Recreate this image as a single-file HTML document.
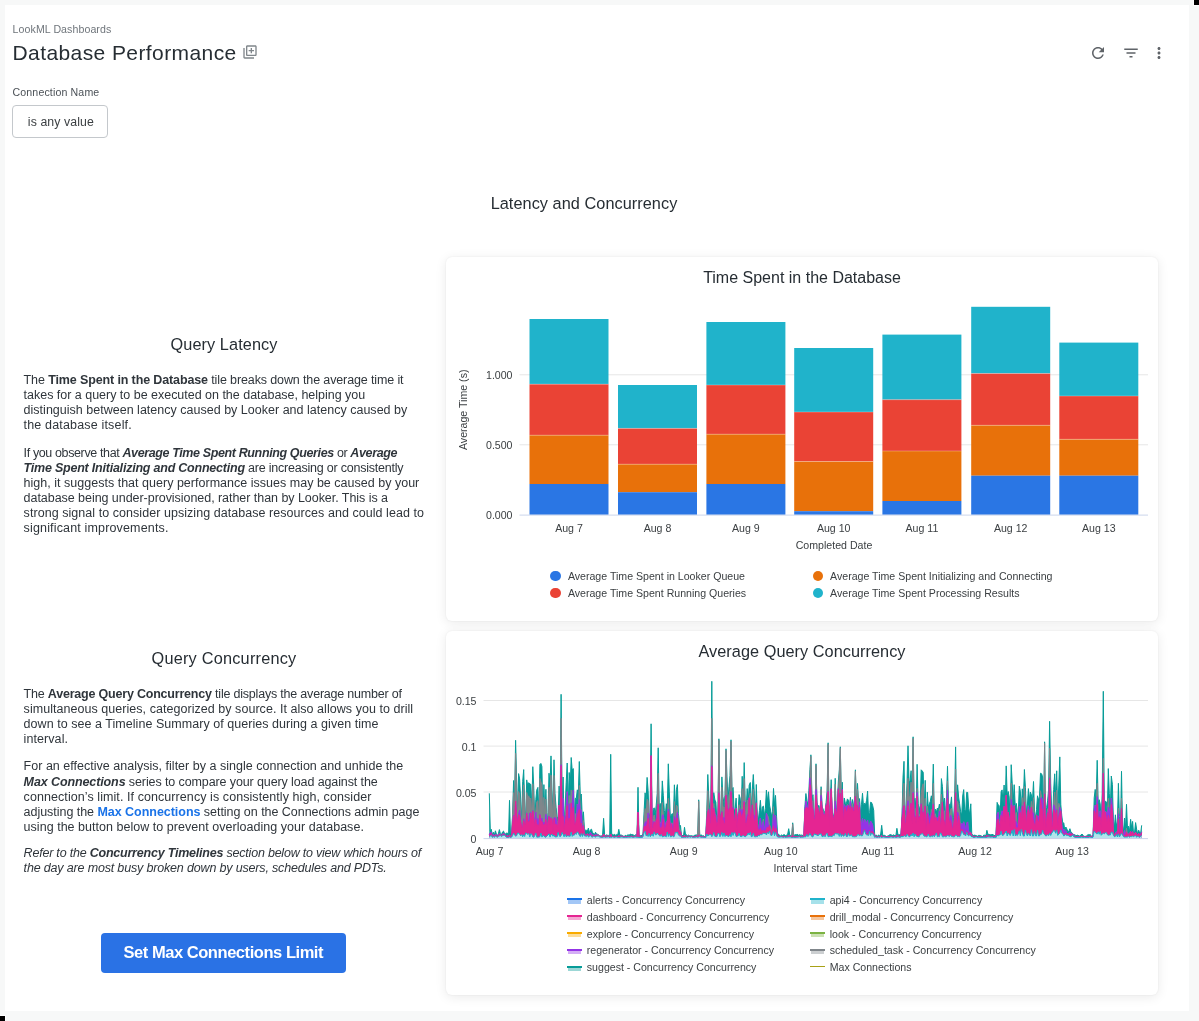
<!DOCTYPE html>
<html>
<head>
<meta charset="utf-8">
<style>
*{box-sizing:border-box;margin:0;padding:0}
html,body{width:1199px;height:1021px;overflow:hidden;}
body{will-change:transform;background:#f7f8f8;font-family:"Liberation Sans",sans-serif;color:#262d33}
.abs{position:absolute;white-space:nowrap}
#panel{position:absolute;left:5px;top:5px;width:1184px;height:1006px;background:#fff}
.blk{position:absolute;background:#000;width:5px;height:5px}
.t{position:absolute;white-space:nowrap;line-height:1}
.para{position:absolute;left:24px;font-size:12.5px;line-height:15px;color:#2f353b;white-space:nowrap}
.ln{position:absolute;left:23.6px;font-size:12.5px;line-height:1;color:#2f353b;white-space:nowrap}
.ln b{font-weight:bold}
.ln i{font-style:italic}
.para b{font-weight:bold}
.para i{font-style:italic}
.card{position:absolute;left:446px;width:712px;background:#fff;border-radius:6px;box-shadow:0 2px 12px rgba(0,0,0,0.085),0 0 2px rgba(0,0,0,0.07)}
svg{position:absolute;overflow:visible}
</style>
</head>
<body>
<div id="panel"></div>
<div class="blk" style="left:1194px;top:0;box-shadow:0 0 0 1px #fff"></div>
<div class="blk" style="left:0;top:1016px;box-shadow:0 0 0 1px #fff"></div>

<!-- header -->
<div class="t" style="left:12.6px;top:24px;font-size:10.6px;letter-spacing:0.08px;color:#6f757b">LookML Dashboards</div>
<div class="t" style="left:12.5px;top:42.1px;font-size:21px;letter-spacing:0.41px;color:#262d33">Database Performance</div>
<svg style="left:242px;top:44px" width="16" height="16" viewBox="0 0 24 24"><path fill="#80868b" d="M4 6H2v14c0 1.1.9 2 2 2h14v-2H4V6zm16-4H8c-1.1 0-2 .9-2 2v12c0 1.1.9 2 2 2h12c1.1 0 2-.9 2-2V4c0-1.1-.9-2-2-2zm0 14H8V4h12v12zm-7-2h2v-3h3V9h-3V6h-2v3h-3v2h3z"/></svg>
<svg style="left:1089px;top:44px" width="18" height="18" viewBox="0 0 24 24"><path fill="#5f6368" d="M17.65 6.35C16.2 4.9 14.21 4 12 4c-4.42 0-7.99 3.580-7.99 8s3.57 8 7.99 8c3.73 0 6.84-2.55 7.73-6h-2.08c-.82 2.33-3.04 4-5.650 4-3.31 0-6-2.69-6-6s2.69-6 6-6c1.66 0 3.140.69 4.22 1.78L13 11h7V4l-2.35 2.35z"/></svg>
<svg style="left:1122px;top:44px" width="18" height="18" viewBox="0 0 24 24"><path fill="#5f6368" d="M10 18h4v-2h-4v2zM3 6v2h18V6H3zm3 7h12v-2H6v2z"/></svg>
<svg style="left:1150px;top:44px" width="18" height="18" viewBox="0 0 24 24"><path fill="#5f6368" d="M12 8c1.1 0 2-.9 2-2s-.9-2-2-2-2 .9-2 2 .9 2 2 2zm0 2c-1.1 0-2 .9-2 2s.9 2 2 2 2-.9 2-2-.9-2-2-2zm0 6c-1.1 0-2 .9-2 2s.9 2 2 2 2-.9 2-2-.9-2-2-2z"/></svg>

<!-- filter -->
<div class="t" style="left:12.5px;top:87px;font-size:10.6px;letter-spacing:0.14px;color:#4a5056">Connection Name</div>
<div style="position:absolute;left:12px;top:105px;width:96px;height:32.5px;border:1px solid #c4c8cc;border-radius:4px"></div>
<div class="t" style="left:27.8px;top:115.5px;font-size:12.3px;letter-spacing:0.1px;color:#3c4043">is any value</div>

<!-- section heading -->
<div class="t" style="left:384px;width:400px;text-align:center;top:195px;font-size:16.3px;letter-spacing:0.05px;color:#262d33">Latency and Concurrency</div>

<div class="t" style="left:24px;width:400px;text-align:center;top:336px;font-size:16.3px;letter-spacing:0.08px;color:#262d33">Query Latency</div>
<div class="t" style="left:24px;width:400px;text-align:center;top:650.2px;font-size:16.3px;letter-spacing:0.22px;color:#262d33">Query Concurrency</div>
<div class="ln" style="top:373.82px;letter-spacing:-0.124px">The <b>Time Spent in the Database</b> tile breaks down the average time it</div>
<div class="ln" style="top:388.72px;letter-spacing:-0.017px">takes for a query to be executed on the database, helping you</div>
<div class="ln" style="top:403.62px;letter-spacing:0.012px">distinguish between latency caused by Looker and latency caused by</div>
<div class="ln" style="top:418.52px;letter-spacing:0.168px">the database itself.</div>
<div class="ln" style="top:447.12px;letter-spacing:-0.375px">If you observe that <b><i>Average Time Spent Running Queries</i></b> or <b><i>Average</i></b></div>
<div class="ln" style="top:462.02px;letter-spacing:-0.221px"><b><i>Time Spent Initializing and Connecting</i></b> are increasing or consistently</div>
<div class="ln" style="top:476.92px;letter-spacing:0.015px">high, it suggests that query performance issues may be caused by your</div>
<div class="ln" style="top:491.82px;letter-spacing:-0.046px">database being under-provisioned, rather than by Looker. This is a</div>
<div class="ln" style="top:506.72px;letter-spacing:0.051px">strong signal to consider upsizing database resources and could lead to</div>
<div class="ln" style="top:521.62px;letter-spacing:0.158px">significant improvements.</div>
<div class="ln" style="top:687.52px;letter-spacing:-0.203px">The <b>Average Query Concurrency</b> tile displays the average number of</div>
<div class="ln" style="top:702.52px;letter-spacing:0.045px">simultaneous queries, categorized by source. It also allows you to drill</div>
<div class="ln" style="top:717.62px;letter-spacing:0.043px">down to see a Timeline Summary of queries during a given time</div>
<div class="ln" style="top:732.62px;letter-spacing:0.075px">interval.</div>
<div class="ln" style="top:760.42px;letter-spacing:0.017px">For an effective analysis, filter by a single connection and unhide the</div>
<div class="ln" style="top:775.52px;letter-spacing:-0.107px"><b><i>Max Connections</i></b> series to compare your query load against the</div>
<div class="ln" style="top:790.62px;letter-spacing:0.075px">connection’s limit. If concurrency is consistently high, consider</div>
<div class="ln" style="top:805.72px;letter-spacing:-0.036px">adjusting the <b style="color:#1a73e8">Max Connections</b> setting on the Connections admin page</div>
<div class="ln" style="top:820.82px;letter-spacing:0.031px">using the button below to prevent overloading your database.</div>
<div class="ln" style="top:847.42px;letter-spacing:-0.211px"><i>Refer to the <b>Concurrency Timelines</b> section below to view which hours of</i></div>
<div class="ln" style="top:861.92px;letter-spacing:-0.165px"><i>the day are most busy broken down by users, schedules and PDTs.</i></div>
<div style="position:absolute;left:101px;top:933px;width:244.5px;height:40px;background:#2a72e5;border-radius:4px"></div>
<div class="t" style="left:101px;width:244.5px;text-align:center;top:944px;font-size:16.5px;font-weight:bold;letter-spacing:-0.45px;color:#fff">Set Max Connections Limit</div>

<div class="card" style="top:257px;height:363.5px"></div>
<div class="t" style="left:602px;width:400px;text-align:center;top:270px;font-size:16px;color:#262d33">Time Spent in the Database</div>
<svg style="left:0;top:0" width="1199" height="1021">
<line x1="519.5" x2="1148" y1="374.8" y2="374.8" stroke="#e6e6e6" stroke-width="1"/>
<line x1="519.5" x2="1148" y1="444.8" y2="444.8" stroke="#e6e6e6" stroke-width="1"/>
<rect x="529.5" y="319" width="79" height="65.20" fill="#20b3cb"/>
<rect x="529.5" y="384.2" width="79" height="51.00" fill="#ea4335"/>
<line x1="529.5" x2="608.5" y1="384.2" y2="384.2" stroke="#fff" stroke-opacity="0.35" stroke-width="0.8"/>
<rect x="529.5" y="435.2" width="79" height="48.80" fill="#e8710a"/>
<line x1="529.5" x2="608.5" y1="435.2" y2="435.2" stroke="#fff" stroke-opacity="0.35" stroke-width="0.8"/>
<rect x="529.5" y="484" width="79" height="30.80" fill="#2a76e4"/>
<rect x="618" y="385" width="79" height="43.40" fill="#20b3cb"/>
<rect x="618" y="428.4" width="79" height="35.80" fill="#ea4335"/>
<line x1="618" x2="697" y1="428.4" y2="428.4" stroke="#fff" stroke-opacity="0.35" stroke-width="0.8"/>
<rect x="618" y="464.2" width="79" height="28.00" fill="#e8710a"/>
<line x1="618" x2="697" y1="464.2" y2="464.2" stroke="#fff" stroke-opacity="0.35" stroke-width="0.8"/>
<rect x="618" y="492.2" width="79" height="22.60" fill="#2a76e4"/>
<rect x="706.4" y="322" width="79" height="63.00" fill="#20b3cb"/>
<rect x="706.4" y="385" width="79" height="49.20" fill="#ea4335"/>
<line x1="706.4" x2="785.4" y1="385" y2="385" stroke="#fff" stroke-opacity="0.35" stroke-width="0.8"/>
<rect x="706.4" y="434.2" width="79" height="49.80" fill="#e8710a"/>
<line x1="706.4" x2="785.4" y1="434.2" y2="434.2" stroke="#fff" stroke-opacity="0.35" stroke-width="0.8"/>
<rect x="706.4" y="484" width="79" height="30.80" fill="#2a76e4"/>
<rect x="794.2" y="348" width="79" height="64.00" fill="#20b3cb"/>
<rect x="794.2" y="412" width="79" height="49.50" fill="#ea4335"/>
<line x1="794.2" x2="873.2" y1="412" y2="412" stroke="#fff" stroke-opacity="0.35" stroke-width="0.8"/>
<rect x="794.2" y="461.5" width="79" height="49.70" fill="#e8710a"/>
<line x1="794.2" x2="873.2" y1="461.5" y2="461.5" stroke="#fff" stroke-opacity="0.35" stroke-width="0.8"/>
<rect x="794.2" y="511.2" width="79" height="3.60" fill="#2a76e4"/>
<rect x="882.4" y="334.6" width="79" height="65.10" fill="#20b3cb"/>
<rect x="882.4" y="399.7" width="79" height="51.30" fill="#ea4335"/>
<line x1="882.4" x2="961.4" y1="399.7" y2="399.7" stroke="#fff" stroke-opacity="0.35" stroke-width="0.8"/>
<rect x="882.4" y="451" width="79" height="50.00" fill="#e8710a"/>
<line x1="882.4" x2="961.4" y1="451" y2="451" stroke="#fff" stroke-opacity="0.35" stroke-width="0.8"/>
<rect x="882.4" y="501" width="79" height="13.80" fill="#2a76e4"/>
<rect x="971.2" y="306.8" width="79" height="66.70" fill="#20b3cb"/>
<rect x="971.2" y="373.5" width="79" height="51.80" fill="#ea4335"/>
<line x1="971.2" x2="1050.2" y1="373.5" y2="373.5" stroke="#fff" stroke-opacity="0.35" stroke-width="0.8"/>
<rect x="971.2" y="425.3" width="79" height="50.40" fill="#e8710a"/>
<line x1="971.2" x2="1050.2" y1="425.3" y2="425.3" stroke="#fff" stroke-opacity="0.35" stroke-width="0.8"/>
<rect x="971.2" y="475.7" width="79" height="39.10" fill="#2a76e4"/>
<rect x="1059.3" y="342.6" width="79" height="53.40" fill="#20b3cb"/>
<rect x="1059.3" y="396" width="79" height="43.30" fill="#ea4335"/>
<line x1="1059.3" x2="1138.3" y1="396" y2="396" stroke="#fff" stroke-opacity="0.35" stroke-width="0.8"/>
<rect x="1059.3" y="439.3" width="79" height="36.40" fill="#e8710a"/>
<line x1="1059.3" x2="1138.3" y1="439.3" y2="439.3" stroke="#fff" stroke-opacity="0.35" stroke-width="0.8"/>
<rect x="1059.3" y="475.7" width="79" height="39.10" fill="#2a76e4"/>
<line x1="519.5" x2="1148" y1="515.0999999999999" y2="515.0999999999999" stroke="#ccd6eb" stroke-width="1"/>
</svg>
<div class="t" style="left:462px;width:50.5px;text-align:right;top:370px;font-size:10.6px;color:#3c4043">1.000</div>
<div class="t" style="left:462px;width:50.5px;text-align:right;top:440px;font-size:10.6px;color:#3c4043">0.500</div>
<div class="t" style="left:462px;width:50.5px;text-align:right;top:510px;font-size:10.6px;color:#3c4043">0.000</div>
<div class="t" style="left:424px;top:404px;width:80px;text-align:center;font-size:10.6px;color:#3c4043;transform:rotate(-90deg);transform-origin:40px 6px">Average Time (s)</div>
<div class="t" style="left:529.0px;width:80px;text-align:center;top:523px;font-size:10.6px;color:#3c4043">Aug 7</div>
<div class="t" style="left:617.5px;width:80px;text-align:center;top:523px;font-size:10.6px;color:#3c4043">Aug 8</div>
<div class="t" style="left:705.9px;width:80px;text-align:center;top:523px;font-size:10.6px;color:#3c4043">Aug 9</div>
<div class="t" style="left:793.7px;width:80px;text-align:center;top:523px;font-size:10.6px;color:#3c4043">Aug 10</div>
<div class="t" style="left:881.9px;width:80px;text-align:center;top:523px;font-size:10.6px;color:#3c4043">Aug 11</div>
<div class="t" style="left:970.7px;width:80px;text-align:center;top:523px;font-size:10.6px;color:#3c4043">Aug 12</div>
<div class="t" style="left:1058.8px;width:80px;text-align:center;top:523px;font-size:10.6px;color:#3c4043">Aug 13</div>
<div class="t" style="left:734px;width:200px;text-align:center;top:540px;font-size:10.6px;color:#3c4043">Completed Date</div>
<div style="position:absolute;left:550.35px;top:570.75px;width:10.5px;height:10.5px;border-radius:50%;background:#2a76e4"></div>
<div class="t" style="left:567.9px;top:571.2px;font-size:10.6px;color:#3c4043">Average Time Spent in Looker Queue</div>
<div style="position:absolute;left:550.35px;top:587.75px;width:10.5px;height:10.5px;border-radius:50%;background:#ea4335"></div>
<div class="t" style="left:567.9px;top:588.2px;font-size:10.6px;color:#3c4043">Average Time Spent Running Queries</div>
<div style="position:absolute;left:812.55px;top:570.75px;width:10.5px;height:10.5px;border-radius:50%;background:#e8710a"></div>
<div class="t" style="left:830.1px;top:571.2px;font-size:10.6px;color:#3c4043">Average Time Spent Initializing and Connecting</div>
<div style="position:absolute;left:812.55px;top:587.75px;width:10.5px;height:10.5px;border-radius:50%;background:#20b3cb"></div>
<div class="t" style="left:830.1px;top:588.2px;font-size:10.6px;color:#3c4043">Average Time Spent Processing Results</div>
<div class="card" style="top:630.5px;height:364.5px"></div>
<div class="t" style="left:602px;width:400px;text-align:center;top:643.2px;font-size:16.3px;letter-spacing:0.04px;color:#262d33">Average Query Concurrency</div>
<svg style="left:0;top:0" width="1199" height="1021">
<line x1="483.5" x2="1148" y1="700.5" y2="700.5" stroke="#e6e6e6" stroke-width="1"/>
<line x1="483.5" x2="1148" y1="746.1" y2="746.1" stroke="#e6e6e6" stroke-width="1"/>
<line x1="483.5" x2="1148" y1="792" y2="792" stroke="#e6e6e6" stroke-width="1"/>
<polygon points="489.3,838.3 489.3,793.3 490.3,830.7 491.3,829.3 492.3,835.1 493.3,832.2 494.4,835.0 495.4,830.8 496.4,833.9 497.4,836.0 498.4,833.6 499.4,829.6 500.4,833.8 501.4,834.9 502.4,832.2 503.5,831.1 504.5,833.5 505.5,834.1 506.5,832.9 507.5,833.1 508.5,837.0 509.5,800.3 510.5,835.7 511.6,834.2 512.6,814.2 513.6,780.5 514.6,798.8 515.6,740.3 516.6,780.0 517.6,814.2 518.6,773.6 519.6,778.8 520.7,799.9 521.7,820.6 522.7,781.5 523.7,769.6 524.7,805.2 525.7,820.7 526.7,779.9 527.7,785.6 528.7,782.7 529.8,784.0 530.8,784.3 531.8,807.5 532.8,766.7 533.8,788.2 534.8,821.6 535.8,799.6 536.8,789.8 537.9,787.4 538.9,816.3 539.9,764.4 540.9,763.4 541.9,766.5 542.9,818.5 543.9,784.6 544.9,815.6 545.9,789.3 547.0,827.1 548.0,812.5 549.0,773.2 550.0,784.9 551.0,755.9 552.0,791.0 553.0,816.1 554.0,759.8 555.0,793.6 556.1,807.3 557.1,817.8 558.1,816.9 559.1,786.1 560.1,808.2 561.1,694.3 562.1,803.0 563.1,777.0 564.1,823.7 565.2,805.3 566.2,782.7 567.2,763.0 568.2,806.6 569.2,772.5 570.2,786.5 571.2,757.5 572.2,770.3 573.3,768.6 574.3,817.1 575.3,798.3 576.3,798.4 577.3,789.8 578.3,794.7 579.3,761.5 580.3,796.0 581.3,794.0 582.4,820.8 583.4,811.8 584.4,828.3 585.4,830.8 586.4,830.3 587.4,831.0 588.4,828.1 589.4,833.1 590.4,829.9 591.5,829.2 592.5,832.7 593.5,833.2 594.5,834.6 595.5,832.2 596.5,834.1 597.5,834.2 598.5,834.7 599.5,835.7 600.6,835.9 601.6,836.1 602.6,834.8 603.6,818.3 604.6,834.6 605.6,836.2 606.6,834.7 607.6,835.4 608.7,835.4 609.7,835.8 610.7,754.3 611.7,836.2 612.7,834.3 613.7,835.1 614.7,834.2 615.7,835.7 616.7,834.4 617.8,834.8 618.8,829.3 619.8,835.0 620.8,835.1 621.8,835.2 622.8,835.9 623.8,836.3 624.8,836.0 625.8,835.3 626.9,836.3 627.9,834.5 628.9,835.4 629.9,834.5 630.9,834.1 631.9,834.9 632.9,834.5 633.9,835.4 635.0,835.9 636.0,834.3 637.0,835.4 638.0,787.3 639.0,835.6 640.0,835.5 641.0,835.9 642.0,835.1 643.0,834.0 644.1,811.3 645.1,792.8 646.1,801.8 647.1,777.4 648.1,790.4 649.1,817.0 650.1,812.9 651.1,723.8 652.1,817.8 653.2,809.4 654.2,807.8 655.2,814.2 656.2,805.4 657.2,793.5 658.2,747.8 659.2,808.3 660.2,803.4 661.2,811.8 662.3,780.9 663.3,795.2 664.3,810.5 665.3,815.8 666.3,803.7 667.3,808.2 668.3,763.8 669.3,791.9 670.4,818.4 671.4,814.4 672.4,813.6 673.4,817.6 674.4,784.8 675.4,810.4 676.4,789.7 677.4,784.6 678.4,813.4 679.5,824.7 680.5,825.5 681.5,836.6 682.5,835.0 683.5,836.0 684.5,827.3 685.5,834.5 686.5,834.7 687.5,835.9 688.6,834.9 689.6,836.0 690.6,835.7 691.6,835.7 692.6,836.0 693.6,836.0 694.6,835.3 695.6,835.0 696.6,834.9 697.7,835.5 698.7,799.8 699.7,835.3 700.7,835.1 701.7,835.1 702.7,836.0 703.7,835.7 704.7,836.9 705.8,836.3 706.8,810.7 707.8,774.5 708.8,797.0 709.8,810.5 710.8,812.8 711.8,681.3 712.8,801.6 713.8,792.7 714.9,800.0 715.9,802.1 716.9,820.5 717.9,814.1 718.9,738.8 719.9,816.1 720.9,813.3 721.9,776.9 722.9,796.5 724.0,803.4 725.0,795.3 726.0,748.8 727.0,776.9 728.0,800.7 729.0,786.3 730.0,775.6 731.0,739.8 732.0,789.9 733.1,787.5 734.1,809.8 735.1,809.9 736.1,798.1 737.1,821.3 738.1,811.4 739.1,794.6 740.1,798.0 741.2,809.4 742.2,776.3 743.2,804.5 744.2,762.6 745.2,801.3 746.2,808.5 747.2,788.6 748.2,802.8 749.2,785.0 750.3,782.5 751.3,810.7 752.3,789.1 753.3,774.5 754.3,793.1 755.3,817.9 756.3,784.5 757.3,815.1 758.3,820.4 759.4,810.4 760.4,800.3 761.4,814.8 762.4,806.9 763.4,806.1 764.4,816.1 765.4,808.5 766.4,790.1 767.5,801.8 768.5,791.8 769.5,805.0 770.5,810.0 771.5,816.3 772.5,811.7 773.5,788.4 774.5,805.4 775.5,795.4 776.6,816.8 777.6,834.9 778.6,834.0 779.6,835.9 780.6,835.8 781.6,834.9 782.6,835.5 783.6,834.8 784.6,834.7 785.7,835.8 786.7,835.0 787.7,834.1 788.7,828.7 789.7,834.5 790.7,835.8 791.7,836.2 792.7,822.8 793.7,835.9 794.8,834.8 795.8,834.6 796.8,834.7 797.8,834.3 798.8,836.1 799.8,834.4 800.8,835.9 801.8,834.7 802.9,835.9 803.9,834.3 804.9,806.5 805.9,793.5 806.9,800.9 807.9,804.1 808.9,790.7 809.9,769.7 810.9,754.8 812.0,798.3 813.0,794.7 814.0,818.0 815.0,814.2 816.0,763.8 817.0,802.9 818.0,806.3 819.0,805.5 820.0,815.4 821.1,786.7 822.1,806.3 823.1,809.1 824.1,812.4 825.1,811.1 826.1,802.3 827.1,791.5 828.1,742.8 829.2,825.8 830.2,803.4 831.2,779.7 832.2,811.1 833.2,815.0 834.2,817.2 835.2,778.3 836.2,808.9 837.2,807.6 838.3,782.1 839.3,769.7 840.3,746.8 841.3,797.0 842.3,782.2 843.3,819.6 844.3,798.0 845.3,803.2 846.3,803.9 847.4,798.9 848.4,800.2 849.4,808.3 850.4,797.3 851.4,807.9 852.4,799.5 853.4,807.7 854.4,799.4 855.4,769.8 856.5,805.4 857.5,783.4 858.5,801.9 859.5,798.6 860.5,814.3 861.5,804.3 862.5,793.2 863.5,806.5 864.6,803.2 865.6,804.8 866.6,800.3 867.6,791.1 868.6,815.8 869.6,812.6 870.6,802.2 871.6,802.6 872.6,805.3 873.7,810.3 874.7,835.8 875.7,835.2 876.7,835.2 877.7,836.5 878.7,834.8 879.7,836.4 880.7,834.0 881.7,825.3 882.8,835.8 883.8,835.3 884.8,835.4 885.8,836.1 886.8,836.7 887.8,835.9 888.8,835.5 889.8,834.7 890.8,834.6 891.9,835.3 892.9,835.5 893.9,834.7 894.9,836.1 895.9,835.3 896.9,828.3 897.9,834.3 898.9,835.0 900.0,834.6 901.0,833.8 902.0,816.0 903.0,777.1 904.0,761.3 905.0,814.2 906.0,809.8 907.0,783.1 908.0,745.8 909.1,783.5 910.1,780.2 911.1,770.7 912.1,798.5 913.1,736.8 914.1,799.5 915.1,798.3 916.1,811.8 917.1,764.3 918.2,803.7 919.2,810.7 920.2,805.4 921.2,769.8 922.2,770.9 923.2,772.3 924.2,808.7 925.2,780.3 926.2,827.0 927.3,792.2 928.3,807.6 929.3,803.9 930.3,801.3 931.3,795.8 932.3,799.7 933.3,764.1 934.3,814.8 935.4,809.2 936.4,812.1 937.4,808.1 938.4,809.6 939.4,804.1 940.4,821.0 941.4,778.6 942.4,786.4 943.4,803.9 944.5,798.1 945.5,819.2 946.5,797.0 947.5,766.2 948.5,803.1 949.5,805.0 950.5,805.6 951.5,796.9 952.5,817.7 953.6,817.0 954.6,801.2 955.6,746.9 956.6,820.1 957.6,784.8 958.6,797.0 959.6,803.7 960.6,811.7 961.7,815.0 962.7,796.0 963.7,789.6 964.7,809.4 965.7,812.1 966.7,792.3 967.7,792.5 968.7,808.4 969.7,814.8 970.8,803.8 971.8,835.4 972.8,834.6 973.8,836.3 974.8,834.8 975.8,835.8 976.8,835.7 977.8,836.3 978.8,835.2 979.9,835.5 980.9,835.7 981.9,836.3 982.9,836.8 983.9,834.9 984.9,835.4 985.9,835.5 986.9,830.3 987.9,834.5 989.0,834.2 990.0,835.1 991.0,834.6 992.0,834.8 993.0,834.3 994.0,836.0 995.0,835.0 996.0,835.5 997.1,802.4 998.1,804.9 999.1,805.4 1000.1,816.5 1001.1,791.8 1002.1,789.9 1003.1,803.5 1004.1,785.0 1005.1,809.5 1006.2,765.9 1007.2,795.8 1008.2,791.5 1009.2,797.1 1010.2,820.8 1011.2,764.7 1012.2,783.1 1013.2,801.8 1014.2,784.7 1015.3,807.6 1016.3,803.4 1017.3,811.9 1018.3,813.0 1019.3,786.1 1020.3,791.1 1021.3,809.7 1022.3,788.8 1023.3,802.2 1024.4,769.5 1025.4,787.3 1026.4,812.8 1027.4,805.0 1028.4,788.6 1029.4,800.1 1030.4,792.0 1031.4,795.1 1032.5,800.3 1033.5,781.5 1034.5,811.2 1035.5,818.1 1036.5,809.7 1037.5,795.8 1038.5,800.2 1039.5,796.8 1040.5,773.2 1041.6,773.8 1042.6,776.9 1043.6,819.7 1044.6,741.8 1045.6,822.5 1046.6,807.5 1047.6,800.9 1048.6,789.9 1049.6,721.3 1050.7,783.2 1051.7,810.8 1052.7,818.0 1053.7,789.7 1054.7,773.8 1055.7,798.1 1056.7,770.8 1057.7,812.2 1058.8,785.1 1059.8,756.9 1060.8,804.8 1061.8,815.9 1062.8,823.4 1063.8,822.8 1064.8,830.7 1065.8,827.0 1066.8,828.8 1067.9,831.8 1068.9,831.2 1069.9,828.7 1070.9,832.0 1071.9,832.9 1072.9,833.7 1073.9,835.3 1074.9,834.5 1075.9,835.7 1077.0,835.4 1078.0,835.0 1079.0,836.3 1080.0,835.8 1081.0,835.0 1082.0,834.0 1083.0,835.2 1084.0,836.4 1085.0,836.4 1086.1,836.3 1087.1,835.4 1088.1,834.5 1089.1,835.1 1090.1,834.3 1091.1,836.1 1092.1,836.3 1093.1,834.5 1094.2,797.9 1095.2,789.4 1096.2,798.2 1097.2,760.3 1098.2,803.2 1099.2,799.7 1100.2,803.9 1101.2,821.4 1102.2,793.8 1103.3,691.3 1104.3,802.6 1105.3,801.2 1106.3,801.8 1107.3,813.4 1108.3,768.6 1109.3,793.6 1110.3,808.5 1111.3,776.0 1112.4,784.4 1113.4,821.3 1114.4,827.2 1115.4,814.8 1116.4,825.6 1117.4,822.3 1118.4,783.3 1119.4,816.4 1120.5,825.5 1121.5,771.3 1122.5,825.9 1123.5,831.5 1124.5,818.0 1125.5,828.0 1126.5,804.3 1127.5,829.0 1128.5,826.2 1129.6,831.5 1130.6,819.3 1131.6,827.7 1132.6,821.4 1133.6,834.4 1134.6,832.0 1135.6,822.6 1136.6,829.1 1137.6,834.1 1138.7,830.2 1139.7,833.0 1140.7,832.9 1141.7,825.3 1141.7,838.3" fill="#079c98"/>
<polyline points="489.3,793.3 490.3,830.7 491.3,829.3 492.3,835.1 493.3,832.2 494.4,835.0 495.4,830.8 496.4,833.9 497.4,836.0 498.4,833.6 499.4,829.6 500.4,833.8 501.4,834.9 502.4,832.2 503.5,831.1 504.5,833.5 505.5,834.1 506.5,832.9 507.5,833.1 508.5,837.0 509.5,800.3 510.5,835.7 511.6,834.2 512.6,814.2 513.6,780.5 514.6,798.8 515.6,740.3 516.6,780.0 517.6,814.2 518.6,773.6 519.6,778.8 520.7,799.9 521.7,820.6 522.7,781.5 523.7,769.6 524.7,805.2 525.7,820.7 526.7,779.9 527.7,785.6 528.7,782.7 529.8,784.0 530.8,784.3 531.8,807.5 532.8,766.7 533.8,788.2 534.8,821.6 535.8,799.6 536.8,789.8 537.9,787.4 538.9,816.3 539.9,764.4 540.9,763.4 541.9,766.5 542.9,818.5 543.9,784.6 544.9,815.6 545.9,789.3 547.0,827.1 548.0,812.5 549.0,773.2 550.0,784.9 551.0,755.9 552.0,791.0 553.0,816.1 554.0,759.8 555.0,793.6 556.1,807.3 557.1,817.8 558.1,816.9 559.1,786.1 560.1,808.2 561.1,694.3 562.1,803.0 563.1,777.0 564.1,823.7 565.2,805.3 566.2,782.7 567.2,763.0 568.2,806.6 569.2,772.5 570.2,786.5 571.2,757.5 572.2,770.3 573.3,768.6 574.3,817.1 575.3,798.3 576.3,798.4 577.3,789.8 578.3,794.7 579.3,761.5 580.3,796.0 581.3,794.0 582.4,820.8 583.4,811.8 584.4,828.3 585.4,830.8 586.4,830.3 587.4,831.0 588.4,828.1 589.4,833.1 590.4,829.9 591.5,829.2 592.5,832.7 593.5,833.2 594.5,834.6 595.5,832.2 596.5,834.1 597.5,834.2 598.5,834.7 599.5,835.7 600.6,835.9 601.6,836.1 602.6,834.8 603.6,818.3 604.6,834.6 605.6,836.2 606.6,834.7 607.6,835.4 608.7,835.4 609.7,835.8 610.7,754.3 611.7,836.2 612.7,834.3 613.7,835.1 614.7,834.2 615.7,835.7 616.7,834.4 617.8,834.8 618.8,829.3 619.8,835.0 620.8,835.1 621.8,835.2 622.8,835.9 623.8,836.3 624.8,836.0 625.8,835.3 626.9,836.3 627.9,834.5 628.9,835.4 629.9,834.5 630.9,834.1 631.9,834.9 632.9,834.5 633.9,835.4 635.0,835.9 636.0,834.3 637.0,835.4 638.0,787.3 639.0,835.6 640.0,835.5 641.0,835.9 642.0,835.1 643.0,834.0 644.1,811.3 645.1,792.8 646.1,801.8 647.1,777.4 648.1,790.4 649.1,817.0 650.1,812.9 651.1,723.8 652.1,817.8 653.2,809.4 654.2,807.8 655.2,814.2 656.2,805.4 657.2,793.5 658.2,747.8 659.2,808.3 660.2,803.4 661.2,811.8 662.3,780.9 663.3,795.2 664.3,810.5 665.3,815.8 666.3,803.7 667.3,808.2 668.3,763.8 669.3,791.9 670.4,818.4 671.4,814.4 672.4,813.6 673.4,817.6 674.4,784.8 675.4,810.4 676.4,789.7 677.4,784.6 678.4,813.4 679.5,824.7 680.5,825.5 681.5,836.6 682.5,835.0 683.5,836.0 684.5,827.3 685.5,834.5 686.5,834.7 687.5,835.9 688.6,834.9 689.6,836.0 690.6,835.7 691.6,835.7 692.6,836.0 693.6,836.0 694.6,835.3 695.6,835.0 696.6,834.9 697.7,835.5 698.7,799.8 699.7,835.3 700.7,835.1 701.7,835.1 702.7,836.0 703.7,835.7 704.7,836.9 705.8,836.3 706.8,810.7 707.8,774.5 708.8,797.0 709.8,810.5 710.8,812.8 711.8,681.3 712.8,801.6 713.8,792.7 714.9,800.0 715.9,802.1 716.9,820.5 717.9,814.1 718.9,738.8 719.9,816.1 720.9,813.3 721.9,776.9 722.9,796.5 724.0,803.4 725.0,795.3 726.0,748.8 727.0,776.9 728.0,800.7 729.0,786.3 730.0,775.6 731.0,739.8 732.0,789.9 733.1,787.5 734.1,809.8 735.1,809.9 736.1,798.1 737.1,821.3 738.1,811.4 739.1,794.6 740.1,798.0 741.2,809.4 742.2,776.3 743.2,804.5 744.2,762.6 745.2,801.3 746.2,808.5 747.2,788.6 748.2,802.8 749.2,785.0 750.3,782.5 751.3,810.7 752.3,789.1 753.3,774.5 754.3,793.1 755.3,817.9 756.3,784.5 757.3,815.1 758.3,820.4 759.4,810.4 760.4,800.3 761.4,814.8 762.4,806.9 763.4,806.1 764.4,816.1 765.4,808.5 766.4,790.1 767.5,801.8 768.5,791.8 769.5,805.0 770.5,810.0 771.5,816.3 772.5,811.7 773.5,788.4 774.5,805.4 775.5,795.4 776.6,816.8 777.6,834.9 778.6,834.0 779.6,835.9 780.6,835.8 781.6,834.9 782.6,835.5 783.6,834.8 784.6,834.7 785.7,835.8 786.7,835.0 787.7,834.1 788.7,828.7 789.7,834.5 790.7,835.8 791.7,836.2 792.7,822.8 793.7,835.9 794.8,834.8 795.8,834.6 796.8,834.7 797.8,834.3 798.8,836.1 799.8,834.4 800.8,835.9 801.8,834.7 802.9,835.9 803.9,834.3 804.9,806.5 805.9,793.5 806.9,800.9 807.9,804.1 808.9,790.7 809.9,769.7 810.9,754.8 812.0,798.3 813.0,794.7 814.0,818.0 815.0,814.2 816.0,763.8 817.0,802.9 818.0,806.3 819.0,805.5 820.0,815.4 821.1,786.7 822.1,806.3 823.1,809.1 824.1,812.4 825.1,811.1 826.1,802.3 827.1,791.5 828.1,742.8 829.2,825.8 830.2,803.4 831.2,779.7 832.2,811.1 833.2,815.0 834.2,817.2 835.2,778.3 836.2,808.9 837.2,807.6 838.3,782.1 839.3,769.7 840.3,746.8 841.3,797.0 842.3,782.2 843.3,819.6 844.3,798.0 845.3,803.2 846.3,803.9 847.4,798.9 848.4,800.2 849.4,808.3 850.4,797.3 851.4,807.9 852.4,799.5 853.4,807.7 854.4,799.4 855.4,769.8 856.5,805.4 857.5,783.4 858.5,801.9 859.5,798.6 860.5,814.3 861.5,804.3 862.5,793.2 863.5,806.5 864.6,803.2 865.6,804.8 866.6,800.3 867.6,791.1 868.6,815.8 869.6,812.6 870.6,802.2 871.6,802.6 872.6,805.3 873.7,810.3 874.7,835.8 875.7,835.2 876.7,835.2 877.7,836.5 878.7,834.8 879.7,836.4 880.7,834.0 881.7,825.3 882.8,835.8 883.8,835.3 884.8,835.4 885.8,836.1 886.8,836.7 887.8,835.9 888.8,835.5 889.8,834.7 890.8,834.6 891.9,835.3 892.9,835.5 893.9,834.7 894.9,836.1 895.9,835.3 896.9,828.3 897.9,834.3 898.9,835.0 900.0,834.6 901.0,833.8 902.0,816.0 903.0,777.1 904.0,761.3 905.0,814.2 906.0,809.8 907.0,783.1 908.0,745.8 909.1,783.5 910.1,780.2 911.1,770.7 912.1,798.5 913.1,736.8 914.1,799.5 915.1,798.3 916.1,811.8 917.1,764.3 918.2,803.7 919.2,810.7 920.2,805.4 921.2,769.8 922.2,770.9 923.2,772.3 924.2,808.7 925.2,780.3 926.2,827.0 927.3,792.2 928.3,807.6 929.3,803.9 930.3,801.3 931.3,795.8 932.3,799.7 933.3,764.1 934.3,814.8 935.4,809.2 936.4,812.1 937.4,808.1 938.4,809.6 939.4,804.1 940.4,821.0 941.4,778.6 942.4,786.4 943.4,803.9 944.5,798.1 945.5,819.2 946.5,797.0 947.5,766.2 948.5,803.1 949.5,805.0 950.5,805.6 951.5,796.9 952.5,817.7 953.6,817.0 954.6,801.2 955.6,746.9 956.6,820.1 957.6,784.8 958.6,797.0 959.6,803.7 960.6,811.7 961.7,815.0 962.7,796.0 963.7,789.6 964.7,809.4 965.7,812.1 966.7,792.3 967.7,792.5 968.7,808.4 969.7,814.8 970.8,803.8 971.8,835.4 972.8,834.6 973.8,836.3 974.8,834.8 975.8,835.8 976.8,835.7 977.8,836.3 978.8,835.2 979.9,835.5 980.9,835.7 981.9,836.3 982.9,836.8 983.9,834.9 984.9,835.4 985.9,835.5 986.9,830.3 987.9,834.5 989.0,834.2 990.0,835.1 991.0,834.6 992.0,834.8 993.0,834.3 994.0,836.0 995.0,835.0 996.0,835.5 997.1,802.4 998.1,804.9 999.1,805.4 1000.1,816.5 1001.1,791.8 1002.1,789.9 1003.1,803.5 1004.1,785.0 1005.1,809.5 1006.2,765.9 1007.2,795.8 1008.2,791.5 1009.2,797.1 1010.2,820.8 1011.2,764.7 1012.2,783.1 1013.2,801.8 1014.2,784.7 1015.3,807.6 1016.3,803.4 1017.3,811.9 1018.3,813.0 1019.3,786.1 1020.3,791.1 1021.3,809.7 1022.3,788.8 1023.3,802.2 1024.4,769.5 1025.4,787.3 1026.4,812.8 1027.4,805.0 1028.4,788.6 1029.4,800.1 1030.4,792.0 1031.4,795.1 1032.5,800.3 1033.5,781.5 1034.5,811.2 1035.5,818.1 1036.5,809.7 1037.5,795.8 1038.5,800.2 1039.5,796.8 1040.5,773.2 1041.6,773.8 1042.6,776.9 1043.6,819.7 1044.6,741.8 1045.6,822.5 1046.6,807.5 1047.6,800.9 1048.6,789.9 1049.6,721.3 1050.7,783.2 1051.7,810.8 1052.7,818.0 1053.7,789.7 1054.7,773.8 1055.7,798.1 1056.7,770.8 1057.7,812.2 1058.8,785.1 1059.8,756.9 1060.8,804.8 1061.8,815.9 1062.8,823.4 1063.8,822.8 1064.8,830.7 1065.8,827.0 1066.8,828.8 1067.9,831.8 1068.9,831.2 1069.9,828.7 1070.9,832.0 1071.9,832.9 1072.9,833.7 1073.9,835.3 1074.9,834.5 1075.9,835.7 1077.0,835.4 1078.0,835.0 1079.0,836.3 1080.0,835.8 1081.0,835.0 1082.0,834.0 1083.0,835.2 1084.0,836.4 1085.0,836.4 1086.1,836.3 1087.1,835.4 1088.1,834.5 1089.1,835.1 1090.1,834.3 1091.1,836.1 1092.1,836.3 1093.1,834.5 1094.2,797.9 1095.2,789.4 1096.2,798.2 1097.2,760.3 1098.2,803.2 1099.2,799.7 1100.2,803.9 1101.2,821.4 1102.2,793.8 1103.3,691.3 1104.3,802.6 1105.3,801.2 1106.3,801.8 1107.3,813.4 1108.3,768.6 1109.3,793.6 1110.3,808.5 1111.3,776.0 1112.4,784.4 1113.4,821.3 1114.4,827.2 1115.4,814.8 1116.4,825.6 1117.4,822.3 1118.4,783.3 1119.4,816.4 1120.5,825.5 1121.5,771.3 1122.5,825.9 1123.5,831.5 1124.5,818.0 1125.5,828.0 1126.5,804.3 1127.5,829.0 1128.5,826.2 1129.6,831.5 1130.6,819.3 1131.6,827.7 1132.6,821.4 1133.6,834.4 1134.6,832.0 1135.6,822.6 1136.6,829.1 1137.6,834.1 1138.7,830.2 1139.7,833.0 1140.7,832.9 1141.7,825.3" fill="none" stroke="#079c98" stroke-width="1.0" stroke-linejoin="round"/>
<polygon points="489.3,838.3 489.3,834.2 490.3,832.7 491.3,832.3 492.3,836.2 493.3,834.5 494.4,836.4 495.4,834.4 496.4,834.7 497.4,836.9 498.4,834.6 499.4,833.8 500.4,834.6 501.4,835.7 502.4,834.2 503.5,833.5 504.5,834.1 505.5,835.1 506.5,836.3 507.5,835.5 508.5,837.4 509.5,834.9 510.5,837.1 511.6,836.6 512.6,816.9 513.6,792.7 514.6,811.2 515.6,753.3 516.6,791.3 517.6,818.6 518.6,791.5 519.6,794.2 520.7,814.0 521.7,823.2 522.7,799.7 523.7,784.8 524.7,812.2 525.7,824.0 526.7,792.5 527.7,796.8 528.7,795.8 529.8,799.5 530.8,798.2 531.8,814.6 532.8,783.8 533.8,800.9 534.8,824.7 535.8,812.2 536.8,801.7 537.9,800.7 538.9,827.0 539.9,778.4 540.9,781.7 541.9,785.0 542.9,821.8 543.9,797.4 544.9,819.1 545.9,799.1 547.0,831.7 548.0,821.5 549.0,787.3 550.0,796.7 551.0,775.2 552.0,801.4 553.0,821.1 554.0,775.4 555.0,803.2 556.1,813.9 557.1,820.7 558.1,823.8 559.1,805.1 560.1,817.6 561.1,718.3 562.1,811.5 563.1,798.5 564.1,830.6 565.2,813.5 566.2,805.0 567.2,791.7 568.2,821.4 569.2,795.5 570.2,808.4 571.2,789.9 572.2,798.3 573.3,790.2 574.3,823.8 575.3,813.5 576.3,820.0 577.3,804.2 578.3,811.4 579.3,785.4 580.3,807.9 581.3,810.3 582.4,828.8 583.4,820.5 584.4,833.1 585.4,834.5 586.4,834.7 587.4,833.7 588.4,834.8 589.4,835.0 590.4,832.5 591.5,833.7 592.5,835.5 593.5,835.3 594.5,835.8 595.5,834.4 596.5,834.9 597.5,835.0 598.5,835.1 599.5,836.5 600.6,837.0 601.6,836.7 602.6,836.8 603.6,834.0 604.6,836.1 605.6,836.8 606.6,836.1 607.6,836.2 608.7,836.2 609.7,837.3 610.7,834.1 611.7,836.9 612.7,836.5 613.7,836.6 614.7,836.6 615.7,836.3 616.7,836.5 617.8,836.9 618.8,835.6 619.8,837.4 620.8,836.1 621.8,836.3 622.8,836.4 623.8,837.0 624.8,836.8 625.8,836.9 626.9,836.8 627.9,836.8 628.9,836.6 629.9,836.4 630.9,836.5 631.9,836.1 632.9,836.7 633.9,836.7 635.0,836.4 636.0,836.2 637.0,836.4 638.0,812.2 639.0,836.8 640.0,837.0 641.0,837.1 642.0,837.3 643.0,836.1 644.1,819.0 645.1,808.5 646.1,814.6 647.1,799.3 648.1,800.7 649.1,823.5 650.1,825.6 651.1,755.6 652.1,826.8 653.2,818.4 654.2,815.0 655.2,821.9 656.2,820.4 657.2,805.4 658.2,773.3 659.2,820.3 660.2,823.0 661.2,821.3 662.3,802.5 663.3,814.9 664.3,822.4 665.3,824.8 666.3,821.6 667.3,821.4 668.3,798.3 669.3,814.3 670.4,826.5 671.4,823.0 672.4,822.9 673.4,824.8 674.4,801.6 675.4,821.8 676.4,805.2 677.4,806.4 678.4,822.3 679.5,830.6 680.5,829.9 681.5,837.1 682.5,836.5 683.5,836.8 684.5,835.3 685.5,836.8 686.5,836.3 687.5,836.9 688.6,836.1 689.6,836.7 690.6,836.8 691.6,836.5 692.6,836.8 693.6,837.2 694.6,837.0 695.6,836.6 696.6,836.0 697.7,836.5 698.7,801.3 699.7,836.0 700.7,836.6 701.7,837.0 702.7,836.9 703.7,837.1 704.7,837.4 705.8,836.9 706.8,817.1 707.8,790.7 708.8,808.8 709.8,819.1 710.8,816.2 711.8,718.3 712.8,811.8 713.8,803.5 714.9,813.3 715.9,815.2 716.9,826.6 717.9,821.1 718.9,740.3 719.9,820.1 720.9,815.9 721.9,787.2 722.9,806.0 724.0,809.2 725.0,806.7 726.0,750.3 727.0,795.7 728.0,816.3 729.0,795.5 730.0,790.7 731.0,741.3 732.0,797.0 733.1,807.5 734.1,818.8 735.1,820.8 736.1,808.2 737.1,824.9 738.1,815.4 739.1,804.7 740.1,808.9 741.2,813.3 742.2,788.6 743.2,812.1 744.2,778.6 745.2,810.1 746.2,814.4 747.2,799.9 748.2,809.0 749.2,797.6 750.3,793.1 751.3,818.0 752.3,804.4 753.3,789.3 754.3,801.2 755.3,824.3 756.3,802.8 757.3,819.8 758.3,829.9 759.4,824.0 760.4,818.0 761.4,828.5 762.4,824.5 763.4,819.1 764.4,830.6 765.4,825.6 766.4,813.3 767.5,815.5 768.5,817.3 769.5,824.9 770.5,826.8 771.5,832.8 772.5,826.6 773.5,806.7 774.5,823.6 775.5,815.3 776.6,828.5 777.6,836.5 778.6,836.3 779.6,836.8 780.6,836.8 781.6,836.7 782.6,836.6 783.6,836.7 784.6,836.7 785.7,837.2 786.7,836.9 787.7,836.3 788.7,835.1 789.7,836.6 790.7,836.7 791.7,837.1 792.7,824.3 793.7,836.9 794.8,836.9 795.8,836.8 796.8,836.6 797.8,836.5 798.8,836.6 799.8,836.4 800.8,837.0 801.8,836.1 802.9,836.8 803.9,836.6 804.9,810.4 805.9,801.1 806.9,807.2 807.9,808.3 808.9,800.3 809.9,777.9 810.9,756.3 812.0,806.9 813.0,800.7 814.0,819.3 815.0,816.4 816.0,765.3 817.0,805.6 818.0,808.5 819.0,807.5 820.0,818.7 821.1,789.3 822.1,808.4 823.1,810.7 824.1,814.0 825.1,813.5 826.1,804.7 827.1,800.0 828.1,744.3 829.2,827.1 830.2,806.2 831.2,788.7 832.2,813.6 833.2,816.6 834.2,818.4 835.2,784.2 836.2,811.4 837.2,810.7 838.3,788.6 839.3,776.5 840.3,748.3 841.3,799.4 842.3,789.1 843.3,823.4 844.3,804.7 845.3,806.6 846.3,806.9 847.4,804.4 848.4,805.4 849.4,810.2 850.4,799.8 851.4,810.5 852.4,803.5 853.4,811.7 854.4,804.2 855.4,771.3 856.5,808.0 857.5,789.5 858.5,804.8 859.5,801.9 860.5,832.9 861.5,824.1 862.5,818.5 863.5,825.0 864.6,819.2 865.6,821.4 866.6,823.3 867.6,820.1 868.6,828.7 869.6,826.5 870.6,821.1 871.6,822.6 872.6,824.9 873.7,832.7 874.7,836.7 875.7,836.0 876.7,837.1 877.7,837.0 878.7,836.3 879.7,837.5 880.7,836.1 881.7,835.7 882.8,836.8 883.8,836.4 884.8,836.9 885.8,837.0 886.8,837.1 887.8,836.8 888.8,836.8 889.8,836.8 890.8,836.3 891.9,836.5 892.9,836.8 893.9,836.6 894.9,836.5 895.9,837.3 896.9,835.2 897.9,836.1 898.9,836.3 900.0,836.8 901.0,835.9 902.0,818.9 903.0,795.0 904.0,783.3 905.0,819.4 906.0,814.3 907.0,793.9 908.0,778.3 909.1,799.8 910.1,795.3 911.1,782.2 912.1,805.9 913.1,738.3 914.1,812.9 915.1,808.3 916.1,823.5 917.1,788.3 918.2,809.9 919.2,816.3 920.2,813.4 921.2,793.3 922.2,787.0 923.2,783.7 924.2,818.9 925.2,798.3 926.2,829.4 927.3,806.1 928.3,813.7 929.3,817.7 930.3,821.8 931.3,809.4 932.3,811.9 933.3,783.4 934.3,822.6 935.4,813.7 936.4,818.9 937.4,817.7 938.4,818.9 939.4,808.4 940.4,824.0 941.4,794.3 942.4,802.2 943.4,818.1 944.5,810.7 945.5,828.3 946.5,805.4 947.5,780.9 948.5,815.6 949.5,815.7 950.5,809.7 951.5,808.2 952.5,825.2 953.6,825.2 954.6,811.1 955.6,769.1 956.6,825.0 957.6,801.3 958.6,806.1 959.6,813.0 960.6,829.8 961.7,823.5 962.7,824.7 963.7,821.8 964.7,825.5 965.7,831.7 966.7,823.1 967.7,821.9 968.7,833.6 969.7,831.9 970.8,832.6 971.8,836.2 972.8,836.0 973.8,837.3 974.8,836.4 975.8,836.7 976.8,836.6 977.8,837.5 978.8,836.7 979.9,837.3 980.9,836.9 981.9,837.3 982.9,837.2 983.9,837.1 984.9,836.9 985.9,837.5 986.9,835.2 987.9,836.4 989.0,836.0 990.0,836.6 991.0,836.6 992.0,836.7 993.0,836.5 994.0,837.2 995.0,836.5 996.0,836.9 997.1,814.3 998.1,812.3 999.1,820.4 1000.1,823.3 1001.1,814.8 1002.1,810.8 1003.1,813.5 1004.1,806.3 1005.1,821.8 1006.2,795.3 1007.2,818.1 1008.2,812.2 1009.2,818.0 1010.2,828.3 1011.2,783.3 1012.2,806.3 1013.2,817.3 1014.2,805.3 1015.3,817.9 1016.3,812.5 1017.3,827.3 1018.3,822.9 1019.3,806.6 1020.3,812.5 1021.3,819.4 1022.3,797.7 1023.3,815.0 1024.4,786.5 1025.4,802.9 1026.4,824.6 1027.4,811.7 1028.4,805.7 1029.4,813.3 1030.4,813.0 1031.4,801.4 1032.5,810.6 1033.5,797.7 1034.5,824.1 1035.5,826.3 1036.5,814.8 1037.5,816.9 1038.5,815.9 1039.5,821.4 1040.5,790.7 1041.6,797.4 1042.6,801.0 1043.6,827.1 1044.6,743.3 1045.6,828.4 1046.6,820.2 1047.6,808.7 1048.6,811.0 1049.6,748.3 1050.7,804.9 1051.7,820.7 1052.7,825.7 1053.7,804.8 1054.7,792.1 1055.7,812.6 1056.7,790.1 1057.7,821.0 1058.8,803.3 1059.8,807.3 1060.8,810.1 1061.8,824.6 1062.8,832.0 1063.8,829.1 1064.8,833.7 1065.8,830.7 1066.8,833.4 1067.9,833.8 1068.9,833.1 1069.9,832.3 1070.9,834.5 1071.9,833.9 1072.9,834.0 1073.9,835.9 1074.9,836.3 1075.9,837.1 1077.0,836.8 1078.0,837.0 1079.0,836.9 1080.0,837.2 1081.0,836.7 1082.0,836.4 1083.0,836.5 1084.0,836.9 1085.0,836.9 1086.1,837.1 1087.1,836.7 1088.1,836.9 1089.1,836.6 1090.1,836.2 1091.1,836.7 1092.1,837.1 1093.1,836.8 1094.2,809.0 1095.2,805.0 1096.2,809.2 1097.2,783.3 1098.2,816.5 1099.2,816.6 1100.2,810.8 1101.2,827.6 1102.2,810.4 1103.3,758.3 1104.3,816.1 1105.3,811.4 1106.3,811.9 1107.3,817.2 1108.3,798.3 1109.3,810.4 1110.3,823.1 1111.3,798.0 1112.4,807.1 1113.4,833.6 1114.4,835.9 1115.4,833.1 1116.4,831.7 1117.4,834.3 1118.4,808.3 1119.4,830.8 1120.5,830.4 1121.5,798.3 1122.5,832.7 1123.5,835.9 1124.5,830.4 1125.5,834.8 1126.5,828.3 1127.5,834.9 1128.5,833.8 1129.6,834.0 1130.6,831.4 1131.6,833.0 1132.6,831.6 1133.6,835.9 1134.6,833.5 1135.6,832.3 1136.6,833.5 1137.6,835.0 1138.7,833.2 1139.7,835.1 1140.7,834.4 1141.7,831.9 1141.7,838.3" fill="#80868b"/>
<polyline points="489.3,834.2 490.3,832.7 491.3,832.3 492.3,836.2 493.3,834.5 494.4,836.4 495.4,834.4 496.4,834.7 497.4,836.9 498.4,834.6 499.4,833.8 500.4,834.6 501.4,835.7 502.4,834.2 503.5,833.5 504.5,834.1 505.5,835.1 506.5,836.3 507.5,835.5 508.5,837.4 509.5,834.9 510.5,837.1 511.6,836.6 512.6,816.9 513.6,792.7 514.6,811.2 515.6,753.3 516.6,791.3 517.6,818.6 518.6,791.5 519.6,794.2 520.7,814.0 521.7,823.2 522.7,799.7 523.7,784.8 524.7,812.2 525.7,824.0 526.7,792.5 527.7,796.8 528.7,795.8 529.8,799.5 530.8,798.2 531.8,814.6 532.8,783.8 533.8,800.9 534.8,824.7 535.8,812.2 536.8,801.7 537.9,800.7 538.9,827.0 539.9,778.4 540.9,781.7 541.9,785.0 542.9,821.8 543.9,797.4 544.9,819.1 545.9,799.1 547.0,831.7 548.0,821.5 549.0,787.3 550.0,796.7 551.0,775.2 552.0,801.4 553.0,821.1 554.0,775.4 555.0,803.2 556.1,813.9 557.1,820.7 558.1,823.8 559.1,805.1 560.1,817.6 561.1,718.3 562.1,811.5 563.1,798.5 564.1,830.6 565.2,813.5 566.2,805.0 567.2,791.7 568.2,821.4 569.2,795.5 570.2,808.4 571.2,789.9 572.2,798.3 573.3,790.2 574.3,823.8 575.3,813.5 576.3,820.0 577.3,804.2 578.3,811.4 579.3,785.4 580.3,807.9 581.3,810.3 582.4,828.8 583.4,820.5 584.4,833.1 585.4,834.5 586.4,834.7 587.4,833.7 588.4,834.8 589.4,835.0 590.4,832.5 591.5,833.7 592.5,835.5 593.5,835.3 594.5,835.8 595.5,834.4 596.5,834.9 597.5,835.0 598.5,835.1 599.5,836.5 600.6,837.0 601.6,836.7 602.6,836.8 603.6,834.0 604.6,836.1 605.6,836.8 606.6,836.1 607.6,836.2 608.7,836.2 609.7,837.3 610.7,834.1 611.7,836.9 612.7,836.5 613.7,836.6 614.7,836.6 615.7,836.3 616.7,836.5 617.8,836.9 618.8,835.6 619.8,837.4 620.8,836.1 621.8,836.3 622.8,836.4 623.8,837.0 624.8,836.8 625.8,836.9 626.9,836.8 627.9,836.8 628.9,836.6 629.9,836.4 630.9,836.5 631.9,836.1 632.9,836.7 633.9,836.7 635.0,836.4 636.0,836.2 637.0,836.4 638.0,812.2 639.0,836.8 640.0,837.0 641.0,837.1 642.0,837.3 643.0,836.1 644.1,819.0 645.1,808.5 646.1,814.6 647.1,799.3 648.1,800.7 649.1,823.5 650.1,825.6 651.1,755.6 652.1,826.8 653.2,818.4 654.2,815.0 655.2,821.9 656.2,820.4 657.2,805.4 658.2,773.3 659.2,820.3 660.2,823.0 661.2,821.3 662.3,802.5 663.3,814.9 664.3,822.4 665.3,824.8 666.3,821.6 667.3,821.4 668.3,798.3 669.3,814.3 670.4,826.5 671.4,823.0 672.4,822.9 673.4,824.8 674.4,801.6 675.4,821.8 676.4,805.2 677.4,806.4 678.4,822.3 679.5,830.6 680.5,829.9 681.5,837.1 682.5,836.5 683.5,836.8 684.5,835.3 685.5,836.8 686.5,836.3 687.5,836.9 688.6,836.1 689.6,836.7 690.6,836.8 691.6,836.5 692.6,836.8 693.6,837.2 694.6,837.0 695.6,836.6 696.6,836.0 697.7,836.5 698.7,801.3 699.7,836.0 700.7,836.6 701.7,837.0 702.7,836.9 703.7,837.1 704.7,837.4 705.8,836.9 706.8,817.1 707.8,790.7 708.8,808.8 709.8,819.1 710.8,816.2 711.8,718.3 712.8,811.8 713.8,803.5 714.9,813.3 715.9,815.2 716.9,826.6 717.9,821.1 718.9,740.3 719.9,820.1 720.9,815.9 721.9,787.2 722.9,806.0 724.0,809.2 725.0,806.7 726.0,750.3 727.0,795.7 728.0,816.3 729.0,795.5 730.0,790.7 731.0,741.3 732.0,797.0 733.1,807.5 734.1,818.8 735.1,820.8 736.1,808.2 737.1,824.9 738.1,815.4 739.1,804.7 740.1,808.9 741.2,813.3 742.2,788.6 743.2,812.1 744.2,778.6 745.2,810.1 746.2,814.4 747.2,799.9 748.2,809.0 749.2,797.6 750.3,793.1 751.3,818.0 752.3,804.4 753.3,789.3 754.3,801.2 755.3,824.3 756.3,802.8 757.3,819.8 758.3,829.9 759.4,824.0 760.4,818.0 761.4,828.5 762.4,824.5 763.4,819.1 764.4,830.6 765.4,825.6 766.4,813.3 767.5,815.5 768.5,817.3 769.5,824.9 770.5,826.8 771.5,832.8 772.5,826.6 773.5,806.7 774.5,823.6 775.5,815.3 776.6,828.5 777.6,836.5 778.6,836.3 779.6,836.8 780.6,836.8 781.6,836.7 782.6,836.6 783.6,836.7 784.6,836.7 785.7,837.2 786.7,836.9 787.7,836.3 788.7,835.1 789.7,836.6 790.7,836.7 791.7,837.1 792.7,824.3 793.7,836.9 794.8,836.9 795.8,836.8 796.8,836.6 797.8,836.5 798.8,836.6 799.8,836.4 800.8,837.0 801.8,836.1 802.9,836.8 803.9,836.6 804.9,810.4 805.9,801.1 806.9,807.2 807.9,808.3 808.9,800.3 809.9,777.9 810.9,756.3 812.0,806.9 813.0,800.7 814.0,819.3 815.0,816.4 816.0,765.3 817.0,805.6 818.0,808.5 819.0,807.5 820.0,818.7 821.1,789.3 822.1,808.4 823.1,810.7 824.1,814.0 825.1,813.5 826.1,804.7 827.1,800.0 828.1,744.3 829.2,827.1 830.2,806.2 831.2,788.7 832.2,813.6 833.2,816.6 834.2,818.4 835.2,784.2 836.2,811.4 837.2,810.7 838.3,788.6 839.3,776.5 840.3,748.3 841.3,799.4 842.3,789.1 843.3,823.4 844.3,804.7 845.3,806.6 846.3,806.9 847.4,804.4 848.4,805.4 849.4,810.2 850.4,799.8 851.4,810.5 852.4,803.5 853.4,811.7 854.4,804.2 855.4,771.3 856.5,808.0 857.5,789.5 858.5,804.8 859.5,801.9 860.5,832.9 861.5,824.1 862.5,818.5 863.5,825.0 864.6,819.2 865.6,821.4 866.6,823.3 867.6,820.1 868.6,828.7 869.6,826.5 870.6,821.1 871.6,822.6 872.6,824.9 873.7,832.7 874.7,836.7 875.7,836.0 876.7,837.1 877.7,837.0 878.7,836.3 879.7,837.5 880.7,836.1 881.7,835.7 882.8,836.8 883.8,836.4 884.8,836.9 885.8,837.0 886.8,837.1 887.8,836.8 888.8,836.8 889.8,836.8 890.8,836.3 891.9,836.5 892.9,836.8 893.9,836.6 894.9,836.5 895.9,837.3 896.9,835.2 897.9,836.1 898.9,836.3 900.0,836.8 901.0,835.9 902.0,818.9 903.0,795.0 904.0,783.3 905.0,819.4 906.0,814.3 907.0,793.9 908.0,778.3 909.1,799.8 910.1,795.3 911.1,782.2 912.1,805.9 913.1,738.3 914.1,812.9 915.1,808.3 916.1,823.5 917.1,788.3 918.2,809.9 919.2,816.3 920.2,813.4 921.2,793.3 922.2,787.0 923.2,783.7 924.2,818.9 925.2,798.3 926.2,829.4 927.3,806.1 928.3,813.7 929.3,817.7 930.3,821.8 931.3,809.4 932.3,811.9 933.3,783.4 934.3,822.6 935.4,813.7 936.4,818.9 937.4,817.7 938.4,818.9 939.4,808.4 940.4,824.0 941.4,794.3 942.4,802.2 943.4,818.1 944.5,810.7 945.5,828.3 946.5,805.4 947.5,780.9 948.5,815.6 949.5,815.7 950.5,809.7 951.5,808.2 952.5,825.2 953.6,825.2 954.6,811.1 955.6,769.1 956.6,825.0 957.6,801.3 958.6,806.1 959.6,813.0 960.6,829.8 961.7,823.5 962.7,824.7 963.7,821.8 964.7,825.5 965.7,831.7 966.7,823.1 967.7,821.9 968.7,833.6 969.7,831.9 970.8,832.6 971.8,836.2 972.8,836.0 973.8,837.3 974.8,836.4 975.8,836.7 976.8,836.6 977.8,837.5 978.8,836.7 979.9,837.3 980.9,836.9 981.9,837.3 982.9,837.2 983.9,837.1 984.9,836.9 985.9,837.5 986.9,835.2 987.9,836.4 989.0,836.0 990.0,836.6 991.0,836.6 992.0,836.7 993.0,836.5 994.0,837.2 995.0,836.5 996.0,836.9 997.1,814.3 998.1,812.3 999.1,820.4 1000.1,823.3 1001.1,814.8 1002.1,810.8 1003.1,813.5 1004.1,806.3 1005.1,821.8 1006.2,795.3 1007.2,818.1 1008.2,812.2 1009.2,818.0 1010.2,828.3 1011.2,783.3 1012.2,806.3 1013.2,817.3 1014.2,805.3 1015.3,817.9 1016.3,812.5 1017.3,827.3 1018.3,822.9 1019.3,806.6 1020.3,812.5 1021.3,819.4 1022.3,797.7 1023.3,815.0 1024.4,786.5 1025.4,802.9 1026.4,824.6 1027.4,811.7 1028.4,805.7 1029.4,813.3 1030.4,813.0 1031.4,801.4 1032.5,810.6 1033.5,797.7 1034.5,824.1 1035.5,826.3 1036.5,814.8 1037.5,816.9 1038.5,815.9 1039.5,821.4 1040.5,790.7 1041.6,797.4 1042.6,801.0 1043.6,827.1 1044.6,743.3 1045.6,828.4 1046.6,820.2 1047.6,808.7 1048.6,811.0 1049.6,748.3 1050.7,804.9 1051.7,820.7 1052.7,825.7 1053.7,804.8 1054.7,792.1 1055.7,812.6 1056.7,790.1 1057.7,821.0 1058.8,803.3 1059.8,807.3 1060.8,810.1 1061.8,824.6 1062.8,832.0 1063.8,829.1 1064.8,833.7 1065.8,830.7 1066.8,833.4 1067.9,833.8 1068.9,833.1 1069.9,832.3 1070.9,834.5 1071.9,833.9 1072.9,834.0 1073.9,835.9 1074.9,836.3 1075.9,837.1 1077.0,836.8 1078.0,837.0 1079.0,836.9 1080.0,837.2 1081.0,836.7 1082.0,836.4 1083.0,836.5 1084.0,836.9 1085.0,836.9 1086.1,837.1 1087.1,836.7 1088.1,836.9 1089.1,836.6 1090.1,836.2 1091.1,836.7 1092.1,837.1 1093.1,836.8 1094.2,809.0 1095.2,805.0 1096.2,809.2 1097.2,783.3 1098.2,816.5 1099.2,816.6 1100.2,810.8 1101.2,827.6 1102.2,810.4 1103.3,758.3 1104.3,816.1 1105.3,811.4 1106.3,811.9 1107.3,817.2 1108.3,798.3 1109.3,810.4 1110.3,823.1 1111.3,798.0 1112.4,807.1 1113.4,833.6 1114.4,835.9 1115.4,833.1 1116.4,831.7 1117.4,834.3 1118.4,808.3 1119.4,830.8 1120.5,830.4 1121.5,798.3 1122.5,832.7 1123.5,835.9 1124.5,830.4 1125.5,834.8 1126.5,828.3 1127.5,834.9 1128.5,833.8 1129.6,834.0 1130.6,831.4 1131.6,833.0 1132.6,831.6 1133.6,835.9 1134.6,833.5 1135.6,832.3 1136.6,833.5 1137.6,835.0 1138.7,833.2 1139.7,835.1 1140.7,834.4 1141.7,831.9" fill="none" stroke="#80868b" stroke-width="1.0" stroke-linejoin="round"/>
<polygon points="489.3,838.3 489.3,834.2 490.3,832.7 491.3,832.3 492.3,836.2 493.3,834.5 494.4,836.4 495.4,834.4 496.4,834.7 497.4,836.9 498.4,834.6 499.4,833.8 500.4,834.6 501.4,835.7 502.4,834.2 503.5,833.5 504.5,834.1 505.5,835.1 506.5,836.3 507.5,835.5 508.5,837.4 509.5,834.9 510.5,837.1 511.6,836.6 512.6,822.9 513.6,815.0 514.6,825.6 515.6,801.0 516.6,815.2 517.6,822.9 518.6,814.2 519.6,810.2 520.7,822.2 521.7,827.2 522.7,827.4 523.7,818.8 524.7,824.0 525.7,824.0 526.7,812.9 527.7,821.1 528.7,821.2 529.8,813.0 530.8,812.1 531.8,822.6 532.8,810.5 533.8,817.9 534.8,827.3 535.8,812.2 536.8,826.8 537.9,818.4 538.9,827.0 539.9,814.5 540.9,821.1 541.9,818.0 542.9,824.7 543.9,822.1 544.9,824.3 545.9,814.3 547.0,831.7 548.0,821.5 549.0,816.1 550.0,820.2 551.0,817.6 552.0,819.0 553.0,832.1 554.0,817.9 555.0,817.4 556.1,818.8 557.1,826.7 558.1,823.8 559.1,805.1 560.1,817.6 561.1,764.7 562.1,811.5 563.1,798.5 564.1,830.6 565.2,815.7 566.2,817.3 567.2,791.7 568.2,821.4 569.2,803.7 570.2,823.1 571.2,802.9 572.2,804.4 573.3,790.2 574.3,823.8 575.3,824.3 576.3,820.0 577.3,804.2 578.3,811.4 579.3,799.5 580.3,812.7 581.3,810.3 582.4,830.5 583.4,825.3 584.4,833.1 585.4,834.5 586.4,834.7 587.4,833.7 588.4,834.8 589.4,835.0 590.4,832.5 591.5,833.7 592.5,835.5 593.5,835.3 594.5,835.8 595.5,834.4 596.5,834.9 597.5,835.0 598.5,835.1 599.5,836.5 600.6,837.0 601.6,836.7 602.6,836.8 603.6,834.0 604.6,836.1 605.6,836.8 606.6,836.1 607.6,836.2 608.7,836.2 609.7,837.3 610.7,834.1 611.7,836.9 612.7,836.5 613.7,836.6 614.7,836.6 615.7,836.3 616.7,836.5 617.8,836.9 618.8,835.6 619.8,837.4 620.8,836.1 621.8,836.3 622.8,836.4 623.8,837.0 624.8,836.8 625.8,836.9 626.9,836.8 627.9,836.8 628.9,836.6 629.9,836.4 630.9,836.5 631.9,836.1 632.9,836.7 633.9,836.7 635.0,836.4 636.0,836.2 637.0,836.4 638.0,812.2 639.0,836.8 640.0,837.0 641.0,837.1 642.0,837.3 643.0,836.1 644.1,826.2 645.1,822.4 646.1,821.5 647.1,823.0 648.1,812.9 649.1,827.4 650.1,830.4 651.1,755.6 652.1,828.7 653.2,822.1 654.2,821.5 655.2,825.8 656.2,820.4 657.2,813.7 658.2,804.3 659.2,820.3 660.2,823.0 661.2,827.6 662.3,815.2 663.3,814.9 664.3,822.4 665.3,828.3 666.3,821.6 667.3,821.4 668.3,809.1 669.3,814.3 670.4,826.5 671.4,823.0 672.4,825.1 673.4,829.8 674.4,816.6 675.4,824.1 676.4,817.1 677.4,812.5 678.4,829.5 679.5,830.6 680.5,832.2 681.5,837.1 682.5,836.5 683.5,836.8 684.5,835.3 685.5,836.8 686.5,836.3 687.5,836.9 688.6,836.1 689.6,836.7 690.6,836.8 691.6,836.5 692.6,836.8 693.6,837.2 694.6,837.0 695.6,836.6 696.6,836.0 697.7,836.5 698.7,835.1 699.7,836.0 700.7,836.6 701.7,837.0 702.7,836.9 703.7,837.1 704.7,837.4 705.8,836.9 706.8,820.3 707.8,811.8 708.8,808.8 709.8,819.1 710.8,816.2 711.8,765.7 712.8,819.3 713.8,808.1 714.9,813.3 715.9,816.6 716.9,826.6 717.9,821.1 718.9,792.6 719.9,821.6 720.9,815.9 721.9,811.5 722.9,818.9 724.0,817.5 725.0,818.6 726.0,795.0 727.0,805.2 728.0,816.3 729.0,808.3 730.0,808.2 731.0,791.2 732.0,811.5 733.1,807.5 734.1,818.8 735.1,820.8 736.1,808.2 737.1,824.9 738.1,815.4 739.1,812.1 740.1,808.9 741.2,813.3 742.2,809.6 743.2,812.1 744.2,801.2 745.2,821.3 746.2,822.7 747.2,814.8 748.2,815.0 749.2,797.6 750.3,817.2 751.3,818.0 752.3,804.8 753.3,815.4 754.3,815.2 755.3,824.3 756.3,802.8 757.3,825.7 758.3,829.9 759.4,824.0 760.4,818.0 761.4,828.5 762.4,824.5 763.4,821.5 764.4,830.6 765.4,825.6 766.4,813.3 767.5,818.7 768.5,827.6 769.5,824.9 770.5,832.6 771.5,832.8 772.5,829.4 773.5,814.2 774.5,823.6 775.5,815.3 776.6,828.5 777.6,836.5 778.6,836.3 779.6,836.8 780.6,836.8 781.6,836.7 782.6,836.6 783.6,836.7 784.6,836.7 785.7,837.2 786.7,836.9 787.7,836.3 788.7,835.1 789.7,836.6 790.7,836.7 791.7,837.1 792.7,835.5 793.7,836.9 794.8,836.9 795.8,836.8 796.8,836.6 797.8,836.5 798.8,836.6 799.8,836.4 800.8,837.0 801.8,836.1 802.9,836.8 803.9,836.6 804.9,810.4 805.9,801.1 806.9,807.2 807.9,808.3 808.9,800.3 809.9,777.9 810.9,789.3 812.0,806.9 813.0,809.3 814.0,819.3 815.0,816.4 816.0,789.4 817.0,805.6 818.0,808.5 819.0,811.4 820.0,818.7 821.1,795.2 822.1,808.4 823.1,812.6 824.1,814.0 825.1,816.3 826.1,804.7 827.1,805.2 828.1,791.1 829.2,827.1 830.2,806.2 831.2,788.7 832.2,813.6 833.2,816.6 834.2,820.4 835.2,801.1 836.2,811.4 837.2,810.7 838.3,788.6 839.3,797.0 840.3,793.4 841.3,807.4 842.3,789.1 843.3,823.4 844.3,804.7 845.3,806.6 846.3,806.9 847.4,805.6 848.4,805.4 849.4,810.2 850.4,801.2 851.4,810.5 852.4,807.4 853.4,811.7 854.4,805.6 855.4,796.1 856.5,808.0 857.5,805.2 858.5,813.1 859.5,801.9 860.5,832.9 861.5,824.1 862.5,818.5 863.5,825.0 864.6,819.2 865.6,821.4 866.6,823.3 867.6,820.1 868.6,828.7 869.6,826.5 870.6,821.1 871.6,822.6 872.6,824.9 873.7,832.7 874.7,836.7 875.7,836.0 876.7,837.1 877.7,837.0 878.7,836.3 879.7,837.5 880.7,836.1 881.7,835.7 882.8,836.8 883.8,836.4 884.8,836.9 885.8,837.0 886.8,837.1 887.8,836.8 888.8,836.8 889.8,836.8 890.8,836.3 891.9,836.5 892.9,836.8 893.9,836.6 894.9,836.5 895.9,837.3 896.9,835.2 897.9,836.1 898.9,836.3 900.0,836.8 901.0,835.9 902.0,818.9 903.0,808.2 904.0,805.6 905.0,823.8 906.0,822.0 907.0,806.9 908.0,800.7 909.1,814.3 910.1,811.9 911.1,803.0 912.1,815.9 913.1,792.2 914.1,812.9 915.1,816.6 916.1,823.5 917.1,792.5 918.2,821.2 919.2,816.3 920.2,821.0 921.2,803.6 922.2,814.0 923.2,811.6 924.2,818.9 925.2,805.9 926.2,829.4 927.3,812.9 928.3,813.7 929.3,817.7 930.3,821.8 931.3,813.5 932.3,811.9 933.3,803.9 934.3,822.6 935.4,816.8 936.4,818.9 937.4,817.7 938.4,818.9 939.4,811.1 940.4,827.0 941.4,818.9 942.4,802.2 943.4,818.1 944.5,822.3 945.5,828.3 946.5,805.4 947.5,790.3 948.5,815.6 949.5,823.0 950.5,815.2 951.5,817.5 952.5,830.0 953.6,825.2 954.6,818.2 955.6,792.2 956.6,825.0 957.6,812.1 958.6,815.0 959.6,821.2 960.6,829.8 961.7,823.5 962.7,824.7 963.7,821.8 964.7,825.5 965.7,831.7 966.7,823.1 967.7,821.9 968.7,833.6 969.7,831.9 970.8,832.6 971.8,836.2 972.8,836.0 973.8,837.3 974.8,836.4 975.8,836.7 976.8,836.6 977.8,837.5 978.8,836.7 979.9,837.3 980.9,836.9 981.9,837.3 982.9,837.2 983.9,837.1 984.9,836.9 985.9,837.5 986.9,835.2 987.9,836.4 989.0,836.0 990.0,836.6 991.0,836.6 992.0,836.7 993.0,836.5 994.0,837.2 995.0,836.5 996.0,836.9 997.1,814.3 998.1,812.3 999.1,824.2 1000.1,823.3 1001.1,814.8 1002.1,810.8 1003.1,813.5 1004.1,806.3 1005.1,821.8 1006.2,795.3 1007.2,818.1 1008.2,812.2 1009.2,818.1 1010.2,828.3 1011.2,799.4 1012.2,806.3 1013.2,817.3 1014.2,805.3 1015.3,825.9 1016.3,821.7 1017.3,827.3 1018.3,822.9 1019.3,806.6 1020.3,812.5 1021.3,822.0 1022.3,805.7 1023.3,815.0 1024.4,801.9 1025.4,814.4 1026.4,824.6 1027.4,812.9 1028.4,806.2 1029.4,813.7 1030.4,813.0 1031.4,807.0 1032.5,814.6 1033.5,812.8 1034.5,824.1 1035.5,826.3 1036.5,814.8 1037.5,816.9 1038.5,815.9 1039.5,821.4 1040.5,798.5 1041.6,797.4 1042.6,801.0 1043.6,827.1 1044.6,793.8 1045.6,828.4 1046.6,820.2 1047.6,812.7 1048.6,811.0 1049.6,777.8 1050.7,804.9 1051.7,821.6 1052.7,825.7 1053.7,804.8 1054.7,807.3 1055.7,814.4 1056.7,809.6 1057.7,826.0 1058.8,816.1 1059.8,807.3 1060.8,810.5 1061.8,824.6 1062.8,832.0 1063.8,829.1 1064.8,833.7 1065.8,830.7 1066.8,833.4 1067.9,833.8 1068.9,833.1 1069.9,832.3 1070.9,834.5 1071.9,833.9 1072.9,834.0 1073.9,835.9 1074.9,836.3 1075.9,837.1 1077.0,836.8 1078.0,837.0 1079.0,836.9 1080.0,837.2 1081.0,836.7 1082.0,836.4 1083.0,836.5 1084.0,836.9 1085.0,836.9 1086.1,837.1 1087.1,836.7 1088.1,836.9 1089.1,836.6 1090.1,836.2 1091.1,836.7 1092.1,837.1 1093.1,836.8 1094.2,810.4 1095.2,805.0 1096.2,816.6 1097.2,796.6 1098.2,816.8 1099.2,816.6 1100.2,810.8 1101.2,827.6 1102.2,810.4 1103.3,773.0 1104.3,820.9 1105.3,811.4 1106.3,811.9 1107.3,817.2 1108.3,807.0 1109.3,810.4 1110.3,823.1 1111.3,798.0 1112.4,807.1 1113.4,833.6 1114.4,835.9 1115.4,833.1 1116.4,831.7 1117.4,834.3 1118.4,813.8 1119.4,830.8 1120.5,830.4 1121.5,808.0 1122.5,833.3 1123.5,835.9 1124.5,830.4 1125.5,834.8 1126.5,831.8 1127.5,834.9 1128.5,833.8 1129.6,834.0 1130.6,831.4 1131.6,833.0 1132.6,831.6 1133.6,835.9 1134.6,833.5 1135.6,832.3 1136.6,833.5 1137.6,835.0 1138.7,833.2 1139.7,835.1 1140.7,834.4 1141.7,831.9 1141.7,838.3" fill="#9334e6"/>
<polyline points="489.3,834.2 490.3,832.7 491.3,832.3 492.3,836.2 493.3,834.5 494.4,836.4 495.4,834.4 496.4,834.7 497.4,836.9 498.4,834.6 499.4,833.8 500.4,834.6 501.4,835.7 502.4,834.2 503.5,833.5 504.5,834.1 505.5,835.1 506.5,836.3 507.5,835.5 508.5,837.4 509.5,834.9 510.5,837.1 511.6,836.6 512.6,822.9 513.6,815.0 514.6,825.6 515.6,801.0 516.6,815.2 517.6,822.9 518.6,814.2 519.6,810.2 520.7,822.2 521.7,827.2 522.7,827.4 523.7,818.8 524.7,824.0 525.7,824.0 526.7,812.9 527.7,821.1 528.7,821.2 529.8,813.0 530.8,812.1 531.8,822.6 532.8,810.5 533.8,817.9 534.8,827.3 535.8,812.2 536.8,826.8 537.9,818.4 538.9,827.0 539.9,814.5 540.9,821.1 541.9,818.0 542.9,824.7 543.9,822.1 544.9,824.3 545.9,814.3 547.0,831.7 548.0,821.5 549.0,816.1 550.0,820.2 551.0,817.6 552.0,819.0 553.0,832.1 554.0,817.9 555.0,817.4 556.1,818.8 557.1,826.7 558.1,823.8 559.1,805.1 560.1,817.6 561.1,764.7 562.1,811.5 563.1,798.5 564.1,830.6 565.2,815.7 566.2,817.3 567.2,791.7 568.2,821.4 569.2,803.7 570.2,823.1 571.2,802.9 572.2,804.4 573.3,790.2 574.3,823.8 575.3,824.3 576.3,820.0 577.3,804.2 578.3,811.4 579.3,799.5 580.3,812.7 581.3,810.3 582.4,830.5 583.4,825.3 584.4,833.1 585.4,834.5 586.4,834.7 587.4,833.7 588.4,834.8 589.4,835.0 590.4,832.5 591.5,833.7 592.5,835.5 593.5,835.3 594.5,835.8 595.5,834.4 596.5,834.9 597.5,835.0 598.5,835.1 599.5,836.5 600.6,837.0 601.6,836.7 602.6,836.8 603.6,834.0 604.6,836.1 605.6,836.8 606.6,836.1 607.6,836.2 608.7,836.2 609.7,837.3 610.7,834.1 611.7,836.9 612.7,836.5 613.7,836.6 614.7,836.6 615.7,836.3 616.7,836.5 617.8,836.9 618.8,835.6 619.8,837.4 620.8,836.1 621.8,836.3 622.8,836.4 623.8,837.0 624.8,836.8 625.8,836.9 626.9,836.8 627.9,836.8 628.9,836.6 629.9,836.4 630.9,836.5 631.9,836.1 632.9,836.7 633.9,836.7 635.0,836.4 636.0,836.2 637.0,836.4 638.0,812.2 639.0,836.8 640.0,837.0 641.0,837.1 642.0,837.3 643.0,836.1 644.1,826.2 645.1,822.4 646.1,821.5 647.1,823.0 648.1,812.9 649.1,827.4 650.1,830.4 651.1,755.6 652.1,828.7 653.2,822.1 654.2,821.5 655.2,825.8 656.2,820.4 657.2,813.7 658.2,804.3 659.2,820.3 660.2,823.0 661.2,827.6 662.3,815.2 663.3,814.9 664.3,822.4 665.3,828.3 666.3,821.6 667.3,821.4 668.3,809.1 669.3,814.3 670.4,826.5 671.4,823.0 672.4,825.1 673.4,829.8 674.4,816.6 675.4,824.1 676.4,817.1 677.4,812.5 678.4,829.5 679.5,830.6 680.5,832.2 681.5,837.1 682.5,836.5 683.5,836.8 684.5,835.3 685.5,836.8 686.5,836.3 687.5,836.9 688.6,836.1 689.6,836.7 690.6,836.8 691.6,836.5 692.6,836.8 693.6,837.2 694.6,837.0 695.6,836.6 696.6,836.0 697.7,836.5 698.7,835.1 699.7,836.0 700.7,836.6 701.7,837.0 702.7,836.9 703.7,837.1 704.7,837.4 705.8,836.9 706.8,820.3 707.8,811.8 708.8,808.8 709.8,819.1 710.8,816.2 711.8,765.7 712.8,819.3 713.8,808.1 714.9,813.3 715.9,816.6 716.9,826.6 717.9,821.1 718.9,792.6 719.9,821.6 720.9,815.9 721.9,811.5 722.9,818.9 724.0,817.5 725.0,818.6 726.0,795.0 727.0,805.2 728.0,816.3 729.0,808.3 730.0,808.2 731.0,791.2 732.0,811.5 733.1,807.5 734.1,818.8 735.1,820.8 736.1,808.2 737.1,824.9 738.1,815.4 739.1,812.1 740.1,808.9 741.2,813.3 742.2,809.6 743.2,812.1 744.2,801.2 745.2,821.3 746.2,822.7 747.2,814.8 748.2,815.0 749.2,797.6 750.3,817.2 751.3,818.0 752.3,804.8 753.3,815.4 754.3,815.2 755.3,824.3 756.3,802.8 757.3,825.7 758.3,829.9 759.4,824.0 760.4,818.0 761.4,828.5 762.4,824.5 763.4,821.5 764.4,830.6 765.4,825.6 766.4,813.3 767.5,818.7 768.5,827.6 769.5,824.9 770.5,832.6 771.5,832.8 772.5,829.4 773.5,814.2 774.5,823.6 775.5,815.3 776.6,828.5 777.6,836.5 778.6,836.3 779.6,836.8 780.6,836.8 781.6,836.7 782.6,836.6 783.6,836.7 784.6,836.7 785.7,837.2 786.7,836.9 787.7,836.3 788.7,835.1 789.7,836.6 790.7,836.7 791.7,837.1 792.7,835.5 793.7,836.9 794.8,836.9 795.8,836.8 796.8,836.6 797.8,836.5 798.8,836.6 799.8,836.4 800.8,837.0 801.8,836.1 802.9,836.8 803.9,836.6 804.9,810.4 805.9,801.1 806.9,807.2 807.9,808.3 808.9,800.3 809.9,777.9 810.9,789.3 812.0,806.9 813.0,809.3 814.0,819.3 815.0,816.4 816.0,789.4 817.0,805.6 818.0,808.5 819.0,811.4 820.0,818.7 821.1,795.2 822.1,808.4 823.1,812.6 824.1,814.0 825.1,816.3 826.1,804.7 827.1,805.2 828.1,791.1 829.2,827.1 830.2,806.2 831.2,788.7 832.2,813.6 833.2,816.6 834.2,820.4 835.2,801.1 836.2,811.4 837.2,810.7 838.3,788.6 839.3,797.0 840.3,793.4 841.3,807.4 842.3,789.1 843.3,823.4 844.3,804.7 845.3,806.6 846.3,806.9 847.4,805.6 848.4,805.4 849.4,810.2 850.4,801.2 851.4,810.5 852.4,807.4 853.4,811.7 854.4,805.6 855.4,796.1 856.5,808.0 857.5,805.2 858.5,813.1 859.5,801.9 860.5,832.9 861.5,824.1 862.5,818.5 863.5,825.0 864.6,819.2 865.6,821.4 866.6,823.3 867.6,820.1 868.6,828.7 869.6,826.5 870.6,821.1 871.6,822.6 872.6,824.9 873.7,832.7 874.7,836.7 875.7,836.0 876.7,837.1 877.7,837.0 878.7,836.3 879.7,837.5 880.7,836.1 881.7,835.7 882.8,836.8 883.8,836.4 884.8,836.9 885.8,837.0 886.8,837.1 887.8,836.8 888.8,836.8 889.8,836.8 890.8,836.3 891.9,836.5 892.9,836.8 893.9,836.6 894.9,836.5 895.9,837.3 896.9,835.2 897.9,836.1 898.9,836.3 900.0,836.8 901.0,835.9 902.0,818.9 903.0,808.2 904.0,805.6 905.0,823.8 906.0,822.0 907.0,806.9 908.0,800.7 909.1,814.3 910.1,811.9 911.1,803.0 912.1,815.9 913.1,792.2 914.1,812.9 915.1,816.6 916.1,823.5 917.1,792.5 918.2,821.2 919.2,816.3 920.2,821.0 921.2,803.6 922.2,814.0 923.2,811.6 924.2,818.9 925.2,805.9 926.2,829.4 927.3,812.9 928.3,813.7 929.3,817.7 930.3,821.8 931.3,813.5 932.3,811.9 933.3,803.9 934.3,822.6 935.4,816.8 936.4,818.9 937.4,817.7 938.4,818.9 939.4,811.1 940.4,827.0 941.4,818.9 942.4,802.2 943.4,818.1 944.5,822.3 945.5,828.3 946.5,805.4 947.5,790.3 948.5,815.6 949.5,823.0 950.5,815.2 951.5,817.5 952.5,830.0 953.6,825.2 954.6,818.2 955.6,792.2 956.6,825.0 957.6,812.1 958.6,815.0 959.6,821.2 960.6,829.8 961.7,823.5 962.7,824.7 963.7,821.8 964.7,825.5 965.7,831.7 966.7,823.1 967.7,821.9 968.7,833.6 969.7,831.9 970.8,832.6 971.8,836.2 972.8,836.0 973.8,837.3 974.8,836.4 975.8,836.7 976.8,836.6 977.8,837.5 978.8,836.7 979.9,837.3 980.9,836.9 981.9,837.3 982.9,837.2 983.9,837.1 984.9,836.9 985.9,837.5 986.9,835.2 987.9,836.4 989.0,836.0 990.0,836.6 991.0,836.6 992.0,836.7 993.0,836.5 994.0,837.2 995.0,836.5 996.0,836.9 997.1,814.3 998.1,812.3 999.1,824.2 1000.1,823.3 1001.1,814.8 1002.1,810.8 1003.1,813.5 1004.1,806.3 1005.1,821.8 1006.2,795.3 1007.2,818.1 1008.2,812.2 1009.2,818.1 1010.2,828.3 1011.2,799.4 1012.2,806.3 1013.2,817.3 1014.2,805.3 1015.3,825.9 1016.3,821.7 1017.3,827.3 1018.3,822.9 1019.3,806.6 1020.3,812.5 1021.3,822.0 1022.3,805.7 1023.3,815.0 1024.4,801.9 1025.4,814.4 1026.4,824.6 1027.4,812.9 1028.4,806.2 1029.4,813.7 1030.4,813.0 1031.4,807.0 1032.5,814.6 1033.5,812.8 1034.5,824.1 1035.5,826.3 1036.5,814.8 1037.5,816.9 1038.5,815.9 1039.5,821.4 1040.5,798.5 1041.6,797.4 1042.6,801.0 1043.6,827.1 1044.6,793.8 1045.6,828.4 1046.6,820.2 1047.6,812.7 1048.6,811.0 1049.6,777.8 1050.7,804.9 1051.7,821.6 1052.7,825.7 1053.7,804.8 1054.7,807.3 1055.7,814.4 1056.7,809.6 1057.7,826.0 1058.8,816.1 1059.8,807.3 1060.8,810.5 1061.8,824.6 1062.8,832.0 1063.8,829.1 1064.8,833.7 1065.8,830.7 1066.8,833.4 1067.9,833.8 1068.9,833.1 1069.9,832.3 1070.9,834.5 1071.9,833.9 1072.9,834.0 1073.9,835.9 1074.9,836.3 1075.9,837.1 1077.0,836.8 1078.0,837.0 1079.0,836.9 1080.0,837.2 1081.0,836.7 1082.0,836.4 1083.0,836.5 1084.0,836.9 1085.0,836.9 1086.1,837.1 1087.1,836.7 1088.1,836.9 1089.1,836.6 1090.1,836.2 1091.1,836.7 1092.1,837.1 1093.1,836.8 1094.2,810.4 1095.2,805.0 1096.2,816.6 1097.2,796.6 1098.2,816.8 1099.2,816.6 1100.2,810.8 1101.2,827.6 1102.2,810.4 1103.3,773.0 1104.3,820.9 1105.3,811.4 1106.3,811.9 1107.3,817.2 1108.3,807.0 1109.3,810.4 1110.3,823.1 1111.3,798.0 1112.4,807.1 1113.4,833.6 1114.4,835.9 1115.4,833.1 1116.4,831.7 1117.4,834.3 1118.4,813.8 1119.4,830.8 1120.5,830.4 1121.5,808.0 1122.5,833.3 1123.5,835.9 1124.5,830.4 1125.5,834.8 1126.5,831.8 1127.5,834.9 1128.5,833.8 1129.6,834.0 1130.6,831.4 1131.6,833.0 1132.6,831.6 1133.6,835.9 1134.6,833.5 1135.6,832.3 1136.6,833.5 1137.6,835.0 1138.7,833.2 1139.7,835.1 1140.7,834.4 1141.7,831.9" fill="none" stroke="#9334e6" stroke-width="1.0" stroke-linejoin="round"/>
<polygon points="489.3,838.3 489.3,834.8 490.3,835.3 491.3,833.4 492.3,837.0 493.3,835.5 494.4,836.8 495.4,834.9 496.4,835.6 497.4,837.1 498.4,835.8 499.4,834.2 500.4,834.9 501.4,836.2 502.4,835.0 503.5,834.1 504.5,834.9 505.5,835.9 506.5,836.4 507.5,836.1 508.5,837.4 509.5,834.9 510.5,837.1 511.6,836.6 512.6,823.6 513.6,815.8 514.6,826.5 515.6,801.1 516.6,816.9 517.6,823.2 518.6,814.6 519.6,816.1 520.7,822.6 521.7,827.2 522.7,827.8 523.7,820.8 524.7,824.7 525.7,824.6 526.7,813.6 527.7,822.1 528.7,821.8 529.8,821.6 530.8,813.1 531.8,823.2 532.8,811.0 533.8,818.7 534.8,827.6 535.8,819.3 536.8,827.1 537.9,824.4 538.9,827.6 539.9,814.9 540.9,821.3 541.9,821.5 542.9,824.9 543.9,825.0 544.9,824.6 545.9,819.1 547.0,832.4 548.0,821.7 549.0,816.8 550.0,824.7 551.0,818.1 552.0,819.7 553.0,832.6 554.0,818.6 555.0,824.9 556.1,824.2 557.1,827.5 558.1,824.0 559.1,805.2 560.1,826.9 561.1,765.7 562.1,816.3 563.1,816.4 564.1,830.7 565.2,822.3 566.2,818.1 567.2,805.6 568.2,825.5 569.2,818.1 570.2,823.5 571.2,803.2 572.2,816.4 573.3,807.6 574.3,824.4 575.3,825.2 576.3,820.5 577.3,815.4 578.3,812.2 579.3,809.6 580.3,827.3 581.3,823.0 582.4,831.1 583.4,825.8 584.4,834.4 585.4,835.1 586.4,834.8 587.4,833.9 588.4,834.8 589.4,835.5 590.4,834.4 591.5,835.8 592.5,835.9 593.5,835.3 594.5,835.8 595.5,836.0 596.5,835.6 597.5,835.2 598.5,835.2 599.5,836.6 600.6,837.0 601.6,836.7 602.6,836.8 603.6,834.0 604.6,836.1 605.6,836.8 606.6,836.1 607.6,836.2 608.7,836.2 609.7,837.3 610.7,834.1 611.7,836.9 612.7,836.5 613.7,836.6 614.7,836.6 615.7,836.3 616.7,836.5 617.8,836.9 618.8,835.6 619.8,837.4 620.8,836.1 621.8,836.3 622.8,836.4 623.8,837.0 624.8,836.8 625.8,836.9 626.9,836.8 627.9,836.8 628.9,836.6 629.9,836.4 630.9,836.5 631.9,836.1 632.9,836.7 633.9,836.7 635.0,836.4 636.0,836.2 637.0,836.4 638.0,812.2 639.0,836.8 640.0,837.0 641.0,837.1 642.0,837.3 643.0,836.1 644.1,827.1 645.1,826.0 646.1,828.2 647.1,823.9 648.1,818.3 649.1,828.1 650.1,830.6 651.1,755.8 652.1,829.3 653.2,827.3 654.2,822.2 655.2,826.6 656.2,820.5 657.2,818.1 658.2,804.4 659.2,827.3 660.2,827.4 661.2,830.1 662.3,825.2 663.3,819.2 664.3,829.6 665.3,829.3 666.3,825.6 667.3,821.8 668.3,811.5 669.3,817.0 670.4,832.6 671.4,823.7 672.4,830.6 673.4,832.5 674.4,819.8 675.4,826.6 676.4,818.0 677.4,818.5 678.4,830.0 679.5,831.3 680.5,832.3 681.5,837.1 682.5,836.5 683.5,836.8 684.5,835.3 685.5,836.8 686.5,836.3 687.5,836.9 688.6,836.1 689.6,836.7 690.6,836.8 691.6,836.5 692.6,836.8 693.6,837.2 694.6,837.0 695.6,836.6 696.6,836.0 697.7,836.5 698.7,835.1 699.7,836.0 700.7,836.6 701.7,837.0 702.7,836.9 703.7,837.1 704.7,837.4 705.8,836.9 706.8,821.2 707.8,812.1 708.8,809.6 709.8,824.5 710.8,822.4 711.8,766.7 712.8,820.1 713.8,808.9 714.9,815.4 715.9,820.4 716.9,826.8 717.9,821.8 718.9,793.3 719.9,825.4 720.9,816.3 721.9,812.2 722.9,819.7 724.0,823.4 725.0,824.2 726.0,795.3 727.0,805.9 728.0,816.4 729.0,808.9 730.0,808.6 731.0,791.8 732.0,812.5 733.1,808.4 734.1,819.1 735.1,820.8 736.1,808.7 737.1,830.8 738.1,815.5 739.1,812.6 740.1,811.6 741.2,815.4 742.2,817.5 743.2,812.3 744.2,802.1 745.2,822.3 746.2,826.4 747.2,819.5 748.2,815.4 749.2,798.0 750.3,817.9 751.3,820.4 752.3,804.9 753.3,815.9 754.3,820.7 755.3,824.8 756.3,803.4 757.3,826.4 758.3,829.9 759.4,831.0 760.4,828.2 761.4,831.4 762.4,830.9 763.4,830.6 764.4,831.2 765.4,830.9 766.4,829.4 767.5,827.0 768.5,828.1 769.5,825.4 770.5,832.6 771.5,833.3 772.5,829.9 773.5,825.8 774.5,832.5 775.5,828.0 776.6,831.1 777.6,836.5 778.6,836.3 779.6,836.8 780.6,836.8 781.6,836.7 782.6,836.6 783.6,836.7 784.6,836.7 785.7,837.2 786.7,836.9 787.7,836.3 788.7,835.1 789.7,836.6 790.7,836.7 791.7,837.1 792.7,835.5 793.7,836.9 794.8,836.9 795.8,836.8 796.8,836.6 797.8,836.5 798.8,836.6 799.8,836.4 800.8,837.0 801.8,836.1 802.9,836.8 803.9,836.6 804.9,810.5 805.9,808.1 806.9,807.4 807.9,808.4 808.9,809.2 809.9,784.6 810.9,790.2 812.0,807.4 813.0,810.1 814.0,819.6 815.0,819.9 816.0,795.1 817.0,805.7 818.0,809.4 819.0,811.8 820.0,818.8 821.1,800.9 822.1,809.3 823.1,815.2 824.1,814.5 825.1,816.8 826.1,805.6 827.1,805.2 828.1,791.8 829.2,827.5 830.2,806.7 831.2,788.9 832.2,813.8 833.2,817.5 834.2,820.9 835.2,808.7 836.2,812.4 837.2,813.0 838.3,789.5 839.3,803.2 840.3,793.5 841.3,808.0 842.3,790.0 843.3,823.6 844.3,811.5 845.3,807.2 846.3,813.0 847.4,810.0 848.4,805.7 849.4,810.8 850.4,806.3 851.4,811.1 852.4,807.4 853.4,812.1 854.4,810.6 855.4,796.7 856.5,808.4 857.5,805.6 858.5,813.6 859.5,807.3 860.5,833.5 861.5,834.6 862.5,834.1 863.5,831.1 864.6,829.3 865.6,833.2 866.6,833.7 867.6,833.6 868.6,834.6 869.6,830.2 870.6,834.0 871.6,831.5 872.6,831.8 873.7,833.6 874.7,836.7 875.7,836.0 876.7,837.1 877.7,837.0 878.7,836.3 879.7,837.5 880.7,836.1 881.7,835.7 882.8,836.8 883.8,836.4 884.8,836.9 885.8,837.0 886.8,837.1 887.8,836.8 888.8,836.8 889.8,836.8 890.8,836.3 891.9,836.5 892.9,836.8 893.9,836.6 894.9,836.5 895.9,837.3 896.9,835.2 897.9,836.1 898.9,836.3 900.0,836.8 901.0,835.9 902.0,819.2 903.0,814.0 904.0,805.8 905.0,824.4 906.0,822.5 907.0,815.6 908.0,805.6 909.1,814.6 910.1,811.9 911.1,803.4 912.1,823.8 913.1,793.0 914.1,818.4 915.1,816.7 916.1,824.1 917.1,796.3 918.2,821.7 919.2,816.8 920.2,821.0 921.2,804.4 922.2,814.9 923.2,812.2 924.2,823.1 925.2,806.1 926.2,835.2 927.3,813.8 928.3,820.1 929.3,825.7 930.3,822.6 931.3,817.8 932.3,814.2 933.3,804.8 934.3,823.2 935.4,817.1 936.4,819.2 937.4,822.0 938.4,820.3 939.4,815.9 940.4,827.1 941.4,819.4 942.4,802.5 943.4,819.0 944.5,822.7 945.5,828.8 946.5,811.6 947.5,798.6 948.5,816.3 949.5,823.9 950.5,820.5 951.5,824.5 952.5,830.6 953.6,825.6 954.6,818.3 955.6,792.9 956.6,825.7 957.6,824.0 958.6,815.8 959.6,821.9 960.6,834.0 961.7,829.4 962.7,829.7 963.7,832.9 964.7,833.2 965.7,834.9 966.7,830.6 967.7,833.6 968.7,834.3 969.7,832.9 970.8,832.8 971.8,836.2 972.8,836.0 973.8,837.3 974.8,836.4 975.8,836.7 976.8,836.6 977.8,837.5 978.8,836.7 979.9,837.3 980.9,836.9 981.9,837.3 982.9,837.2 983.9,837.1 984.9,836.9 985.9,837.5 986.9,835.2 987.9,836.4 989.0,836.0 990.0,836.6 991.0,836.6 992.0,836.7 993.0,836.5 994.0,837.2 995.0,836.5 996.0,836.9 997.1,820.6 998.1,819.1 999.1,824.3 1000.1,827.5 1001.1,815.4 1002.1,821.5 1003.1,815.1 1004.1,806.6 1005.1,824.5 1006.2,795.4 1007.2,819.0 1008.2,812.2 1009.2,818.7 1010.2,829.3 1011.2,804.9 1012.2,807.2 1013.2,817.9 1014.2,806.3 1015.3,826.3 1016.3,828.2 1017.3,827.6 1018.3,829.2 1019.3,814.6 1020.3,812.6 1021.3,822.2 1022.3,806.7 1023.3,822.7 1024.4,802.4 1025.4,815.1 1026.4,825.0 1027.4,813.5 1028.4,809.7 1029.4,814.2 1030.4,813.8 1031.4,807.1 1032.5,818.1 1033.5,821.8 1034.5,824.8 1035.5,826.4 1036.5,815.2 1037.5,819.3 1038.5,821.9 1039.5,821.4 1040.5,799.3 1041.6,807.8 1042.6,810.3 1043.6,830.4 1044.6,794.4 1045.6,833.6 1046.6,820.9 1047.6,812.9 1048.6,822.1 1049.6,778.5 1050.7,805.2 1051.7,826.5 1052.7,826.5 1053.7,809.7 1054.7,812.1 1055.7,815.0 1056.7,810.1 1057.7,830.2 1058.8,816.8 1059.8,813.2 1060.8,811.2 1061.8,831.2 1062.8,832.6 1063.8,834.8 1064.8,833.7 1065.8,833.5 1066.8,833.6 1067.9,834.1 1068.9,834.9 1069.9,833.8 1070.9,834.6 1071.9,833.9 1072.9,834.5 1073.9,836.7 1074.9,836.3 1075.9,837.1 1077.0,836.8 1078.0,837.0 1079.0,836.9 1080.0,837.2 1081.0,836.7 1082.0,836.4 1083.0,836.5 1084.0,836.9 1085.0,836.9 1086.1,837.1 1087.1,836.7 1088.1,836.9 1089.1,836.6 1090.1,836.2 1091.1,836.7 1092.1,837.1 1093.1,836.8 1094.2,810.9 1095.2,812.7 1096.2,822.0 1097.2,804.0 1098.2,820.7 1099.2,816.7 1100.2,817.8 1101.2,828.0 1102.2,811.4 1103.3,773.2 1104.3,821.8 1105.3,812.1 1106.3,818.4 1107.3,823.4 1108.3,815.3 1109.3,818.8 1110.3,823.7 1111.3,804.5 1112.4,812.6 1113.4,834.0 1114.4,836.2 1115.4,833.3 1116.4,834.0 1117.4,834.6 1118.4,818.9 1119.4,834.8 1120.5,834.5 1121.5,808.4 1122.5,833.4 1123.5,836.4 1124.5,835.4 1125.5,834.8 1126.5,832.1 1127.5,835.0 1128.5,834.0 1129.6,834.4 1130.6,831.5 1131.6,835.2 1132.6,831.8 1133.6,836.2 1134.6,833.6 1135.6,832.5 1136.6,834.4 1137.6,835.1 1138.7,833.5 1139.7,835.2 1140.7,835.4 1141.7,832.6 1141.7,838.3" fill="#e52592"/>
<polyline points="489.3,834.8 490.3,835.3 491.3,833.4 492.3,837.0 493.3,835.5 494.4,836.8 495.4,834.9 496.4,835.6 497.4,837.1 498.4,835.8 499.4,834.2 500.4,834.9 501.4,836.2 502.4,835.0 503.5,834.1 504.5,834.9 505.5,835.9 506.5,836.4 507.5,836.1 508.5,837.4 509.5,834.9 510.5,837.1 511.6,836.6 512.6,823.6 513.6,815.8 514.6,826.5 515.6,801.1 516.6,816.9 517.6,823.2 518.6,814.6 519.6,816.1 520.7,822.6 521.7,827.2 522.7,827.8 523.7,820.8 524.7,824.7 525.7,824.6 526.7,813.6 527.7,822.1 528.7,821.8 529.8,821.6 530.8,813.1 531.8,823.2 532.8,811.0 533.8,818.7 534.8,827.6 535.8,819.3 536.8,827.1 537.9,824.4 538.9,827.6 539.9,814.9 540.9,821.3 541.9,821.5 542.9,824.9 543.9,825.0 544.9,824.6 545.9,819.1 547.0,832.4 548.0,821.7 549.0,816.8 550.0,824.7 551.0,818.1 552.0,819.7 553.0,832.6 554.0,818.6 555.0,824.9 556.1,824.2 557.1,827.5 558.1,824.0 559.1,805.2 560.1,826.9 561.1,765.7 562.1,816.3 563.1,816.4 564.1,830.7 565.2,822.3 566.2,818.1 567.2,805.6 568.2,825.5 569.2,818.1 570.2,823.5 571.2,803.2 572.2,816.4 573.3,807.6 574.3,824.4 575.3,825.2 576.3,820.5 577.3,815.4 578.3,812.2 579.3,809.6 580.3,827.3 581.3,823.0 582.4,831.1 583.4,825.8 584.4,834.4 585.4,835.1 586.4,834.8 587.4,833.9 588.4,834.8 589.4,835.5 590.4,834.4 591.5,835.8 592.5,835.9 593.5,835.3 594.5,835.8 595.5,836.0 596.5,835.6 597.5,835.2 598.5,835.2 599.5,836.6 600.6,837.0 601.6,836.7 602.6,836.8 603.6,834.0 604.6,836.1 605.6,836.8 606.6,836.1 607.6,836.2 608.7,836.2 609.7,837.3 610.7,834.1 611.7,836.9 612.7,836.5 613.7,836.6 614.7,836.6 615.7,836.3 616.7,836.5 617.8,836.9 618.8,835.6 619.8,837.4 620.8,836.1 621.8,836.3 622.8,836.4 623.8,837.0 624.8,836.8 625.8,836.9 626.9,836.8 627.9,836.8 628.9,836.6 629.9,836.4 630.9,836.5 631.9,836.1 632.9,836.7 633.9,836.7 635.0,836.4 636.0,836.2 637.0,836.4 638.0,812.2 639.0,836.8 640.0,837.0 641.0,837.1 642.0,837.3 643.0,836.1 644.1,827.1 645.1,826.0 646.1,828.2 647.1,823.9 648.1,818.3 649.1,828.1 650.1,830.6 651.1,755.8 652.1,829.3 653.2,827.3 654.2,822.2 655.2,826.6 656.2,820.5 657.2,818.1 658.2,804.4 659.2,827.3 660.2,827.4 661.2,830.1 662.3,825.2 663.3,819.2 664.3,829.6 665.3,829.3 666.3,825.6 667.3,821.8 668.3,811.5 669.3,817.0 670.4,832.6 671.4,823.7 672.4,830.6 673.4,832.5 674.4,819.8 675.4,826.6 676.4,818.0 677.4,818.5 678.4,830.0 679.5,831.3 680.5,832.3 681.5,837.1 682.5,836.5 683.5,836.8 684.5,835.3 685.5,836.8 686.5,836.3 687.5,836.9 688.6,836.1 689.6,836.7 690.6,836.8 691.6,836.5 692.6,836.8 693.6,837.2 694.6,837.0 695.6,836.6 696.6,836.0 697.7,836.5 698.7,835.1 699.7,836.0 700.7,836.6 701.7,837.0 702.7,836.9 703.7,837.1 704.7,837.4 705.8,836.9 706.8,821.2 707.8,812.1 708.8,809.6 709.8,824.5 710.8,822.4 711.8,766.7 712.8,820.1 713.8,808.9 714.9,815.4 715.9,820.4 716.9,826.8 717.9,821.8 718.9,793.3 719.9,825.4 720.9,816.3 721.9,812.2 722.9,819.7 724.0,823.4 725.0,824.2 726.0,795.3 727.0,805.9 728.0,816.4 729.0,808.9 730.0,808.6 731.0,791.8 732.0,812.5 733.1,808.4 734.1,819.1 735.1,820.8 736.1,808.7 737.1,830.8 738.1,815.5 739.1,812.6 740.1,811.6 741.2,815.4 742.2,817.5 743.2,812.3 744.2,802.1 745.2,822.3 746.2,826.4 747.2,819.5 748.2,815.4 749.2,798.0 750.3,817.9 751.3,820.4 752.3,804.9 753.3,815.9 754.3,820.7 755.3,824.8 756.3,803.4 757.3,826.4 758.3,829.9 759.4,831.0 760.4,828.2 761.4,831.4 762.4,830.9 763.4,830.6 764.4,831.2 765.4,830.9 766.4,829.4 767.5,827.0 768.5,828.1 769.5,825.4 770.5,832.6 771.5,833.3 772.5,829.9 773.5,825.8 774.5,832.5 775.5,828.0 776.6,831.1 777.6,836.5 778.6,836.3 779.6,836.8 780.6,836.8 781.6,836.7 782.6,836.6 783.6,836.7 784.6,836.7 785.7,837.2 786.7,836.9 787.7,836.3 788.7,835.1 789.7,836.6 790.7,836.7 791.7,837.1 792.7,835.5 793.7,836.9 794.8,836.9 795.8,836.8 796.8,836.6 797.8,836.5 798.8,836.6 799.8,836.4 800.8,837.0 801.8,836.1 802.9,836.8 803.9,836.6 804.9,810.5 805.9,808.1 806.9,807.4 807.9,808.4 808.9,809.2 809.9,784.6 810.9,790.2 812.0,807.4 813.0,810.1 814.0,819.6 815.0,819.9 816.0,795.1 817.0,805.7 818.0,809.4 819.0,811.8 820.0,818.8 821.1,800.9 822.1,809.3 823.1,815.2 824.1,814.5 825.1,816.8 826.1,805.6 827.1,805.2 828.1,791.8 829.2,827.5 830.2,806.7 831.2,788.9 832.2,813.8 833.2,817.5 834.2,820.9 835.2,808.7 836.2,812.4 837.2,813.0 838.3,789.5 839.3,803.2 840.3,793.5 841.3,808.0 842.3,790.0 843.3,823.6 844.3,811.5 845.3,807.2 846.3,813.0 847.4,810.0 848.4,805.7 849.4,810.8 850.4,806.3 851.4,811.1 852.4,807.4 853.4,812.1 854.4,810.6 855.4,796.7 856.5,808.4 857.5,805.6 858.5,813.6 859.5,807.3 860.5,833.5 861.5,834.6 862.5,834.1 863.5,831.1 864.6,829.3 865.6,833.2 866.6,833.7 867.6,833.6 868.6,834.6 869.6,830.2 870.6,834.0 871.6,831.5 872.6,831.8 873.7,833.6 874.7,836.7 875.7,836.0 876.7,837.1 877.7,837.0 878.7,836.3 879.7,837.5 880.7,836.1 881.7,835.7 882.8,836.8 883.8,836.4 884.8,836.9 885.8,837.0 886.8,837.1 887.8,836.8 888.8,836.8 889.8,836.8 890.8,836.3 891.9,836.5 892.9,836.8 893.9,836.6 894.9,836.5 895.9,837.3 896.9,835.2 897.9,836.1 898.9,836.3 900.0,836.8 901.0,835.9 902.0,819.2 903.0,814.0 904.0,805.8 905.0,824.4 906.0,822.5 907.0,815.6 908.0,805.6 909.1,814.6 910.1,811.9 911.1,803.4 912.1,823.8 913.1,793.0 914.1,818.4 915.1,816.7 916.1,824.1 917.1,796.3 918.2,821.7 919.2,816.8 920.2,821.0 921.2,804.4 922.2,814.9 923.2,812.2 924.2,823.1 925.2,806.1 926.2,835.2 927.3,813.8 928.3,820.1 929.3,825.7 930.3,822.6 931.3,817.8 932.3,814.2 933.3,804.8 934.3,823.2 935.4,817.1 936.4,819.2 937.4,822.0 938.4,820.3 939.4,815.9 940.4,827.1 941.4,819.4 942.4,802.5 943.4,819.0 944.5,822.7 945.5,828.8 946.5,811.6 947.5,798.6 948.5,816.3 949.5,823.9 950.5,820.5 951.5,824.5 952.5,830.6 953.6,825.6 954.6,818.3 955.6,792.9 956.6,825.7 957.6,824.0 958.6,815.8 959.6,821.9 960.6,834.0 961.7,829.4 962.7,829.7 963.7,832.9 964.7,833.2 965.7,834.9 966.7,830.6 967.7,833.6 968.7,834.3 969.7,832.9 970.8,832.8 971.8,836.2 972.8,836.0 973.8,837.3 974.8,836.4 975.8,836.7 976.8,836.6 977.8,837.5 978.8,836.7 979.9,837.3 980.9,836.9 981.9,837.3 982.9,837.2 983.9,837.1 984.9,836.9 985.9,837.5 986.9,835.2 987.9,836.4 989.0,836.0 990.0,836.6 991.0,836.6 992.0,836.7 993.0,836.5 994.0,837.2 995.0,836.5 996.0,836.9 997.1,820.6 998.1,819.1 999.1,824.3 1000.1,827.5 1001.1,815.4 1002.1,821.5 1003.1,815.1 1004.1,806.6 1005.1,824.5 1006.2,795.4 1007.2,819.0 1008.2,812.2 1009.2,818.7 1010.2,829.3 1011.2,804.9 1012.2,807.2 1013.2,817.9 1014.2,806.3 1015.3,826.3 1016.3,828.2 1017.3,827.6 1018.3,829.2 1019.3,814.6 1020.3,812.6 1021.3,822.2 1022.3,806.7 1023.3,822.7 1024.4,802.4 1025.4,815.1 1026.4,825.0 1027.4,813.5 1028.4,809.7 1029.4,814.2 1030.4,813.8 1031.4,807.1 1032.5,818.1 1033.5,821.8 1034.5,824.8 1035.5,826.4 1036.5,815.2 1037.5,819.3 1038.5,821.9 1039.5,821.4 1040.5,799.3 1041.6,807.8 1042.6,810.3 1043.6,830.4 1044.6,794.4 1045.6,833.6 1046.6,820.9 1047.6,812.9 1048.6,822.1 1049.6,778.5 1050.7,805.2 1051.7,826.5 1052.7,826.5 1053.7,809.7 1054.7,812.1 1055.7,815.0 1056.7,810.1 1057.7,830.2 1058.8,816.8 1059.8,813.2 1060.8,811.2 1061.8,831.2 1062.8,832.6 1063.8,834.8 1064.8,833.7 1065.8,833.5 1066.8,833.6 1067.9,834.1 1068.9,834.9 1069.9,833.8 1070.9,834.6 1071.9,833.9 1072.9,834.5 1073.9,836.7 1074.9,836.3 1075.9,837.1 1077.0,836.8 1078.0,837.0 1079.0,836.9 1080.0,837.2 1081.0,836.7 1082.0,836.4 1083.0,836.5 1084.0,836.9 1085.0,836.9 1086.1,837.1 1087.1,836.7 1088.1,836.9 1089.1,836.6 1090.1,836.2 1091.1,836.7 1092.1,837.1 1093.1,836.8 1094.2,810.9 1095.2,812.7 1096.2,822.0 1097.2,804.0 1098.2,820.7 1099.2,816.7 1100.2,817.8 1101.2,828.0 1102.2,811.4 1103.3,773.2 1104.3,821.8 1105.3,812.1 1106.3,818.4 1107.3,823.4 1108.3,815.3 1109.3,818.8 1110.3,823.7 1111.3,804.5 1112.4,812.6 1113.4,834.0 1114.4,836.2 1115.4,833.3 1116.4,834.0 1117.4,834.6 1118.4,818.9 1119.4,834.8 1120.5,834.5 1121.5,808.4 1122.5,833.4 1123.5,836.4 1124.5,835.4 1125.5,834.8 1126.5,832.1 1127.5,835.0 1128.5,834.0 1129.6,834.4 1130.6,831.5 1131.6,835.2 1132.6,831.8 1133.6,836.2 1134.6,833.6 1135.6,832.5 1136.6,834.4 1137.6,835.1 1138.7,833.5 1139.7,835.2 1140.7,835.4 1141.7,832.6" fill="none" stroke="#e52592" stroke-width="1.0" stroke-linejoin="round"/>
<polygon points="489.3,838.3 489.3,836.8 490.3,836.1 491.3,835.4 492.3,837.4 493.3,836.5 494.4,837.4 495.4,835.9 496.4,836.6 497.4,837.4 498.4,836.3 499.4,836.0 500.4,835.3 501.4,836.7 502.4,835.8 503.5,835.5 504.5,835.4 505.5,836.3 506.5,837.4 507.5,837.5 508.5,837.7 509.5,836.9 510.5,837.8 511.6,837.1 512.6,835.5 513.6,833.1 514.6,835.2 515.6,836.1 516.6,835.8 517.6,833.1 518.6,833.0 519.6,834.5 520.7,835.8 521.7,834.6 522.7,836.8 523.7,834.7 524.7,836.5 525.7,832.9 526.7,833.3 527.7,834.5 528.7,833.5 529.8,837.1 530.8,833.6 531.8,834.4 532.8,836.9 533.8,837.2 534.8,835.6 535.8,833.1 536.8,837.2 537.9,837.1 538.9,837.0 539.9,836.8 540.9,833.2 541.9,837.1 542.9,835.7 543.9,835.7 544.9,837.1 545.9,837.2 547.0,835.7 548.0,835.2 549.0,833.8 550.0,837.1 551.0,834.8 552.0,834.2 553.0,836.3 554.0,835.0 555.0,837.0 556.1,836.7 557.1,837.0 558.1,832.4 559.1,835.5 560.1,836.8 561.1,835.7 562.1,832.5 563.1,834.5 564.1,836.8 565.2,834.2 566.2,836.8 567.2,835.9 568.2,835.9 569.2,836.2 570.2,836.3 571.2,832.1 572.2,836.4 573.3,835.1 574.3,835.2 575.3,833.4 576.3,834.4 577.3,831.8 578.3,833.1 579.3,835.2 580.3,836.6 581.3,833.5 582.4,836.5 583.4,833.6 584.4,835.9 585.4,836.0 586.4,836.5 587.4,835.0 588.4,837.0 589.4,836.4 590.4,835.1 591.5,836.9 592.5,837.2 593.5,836.1 594.5,836.5 595.5,837.2 596.5,836.1 597.5,836.2 598.5,836.0 599.5,837.1 600.6,837.2 601.6,837.5 602.6,837.4 603.6,837.0 604.6,837.0 605.6,837.4 606.6,837.1 607.6,837.1 608.7,836.9 609.7,837.7 610.7,837.1 611.7,837.4 612.7,836.8 613.7,837.3 614.7,837.5 615.7,837.0 616.7,837.0 617.8,837.6 618.8,837.6 619.8,837.8 620.8,836.9 621.8,837.1 622.8,837.2 623.8,837.6 624.8,837.4 625.8,837.3 626.9,837.5 627.9,837.1 628.9,837.2 629.9,837.2 630.9,837.0 631.9,837.0 632.9,837.4 633.9,837.3 635.0,836.9 636.0,837.1 637.0,837.2 638.0,837.2 639.0,837.4 640.0,837.7 641.0,837.6 642.0,837.6 643.0,836.8 644.1,832.7 645.1,831.3 646.1,835.9 647.1,835.2 648.1,836.5 649.1,833.4 650.1,836.7 651.1,835.8 652.1,834.1 653.2,836.3 654.2,831.9 655.2,834.7 656.2,834.9 657.2,833.0 658.2,834.4 659.2,835.4 660.2,836.3 661.2,834.5 662.3,836.8 663.3,836.6 664.3,836.1 665.3,836.3 666.3,836.8 667.3,832.0 668.3,836.5 669.3,833.8 670.4,836.8 671.4,836.6 672.4,835.7 673.4,836.8 674.4,836.3 675.4,832.2 676.4,832.7 677.4,832.1 678.4,835.1 679.5,835.9 680.5,835.7 681.5,837.5 682.5,837.5 683.5,837.5 684.5,837.3 685.5,837.4 686.5,837.0 687.5,837.4 688.6,837.0 689.6,836.9 690.6,837.3 691.6,836.8 692.6,837.6 693.6,837.8 694.6,837.6 695.6,837.3 696.6,837.0 697.7,837.5 698.7,837.1 699.7,836.8 700.7,837.2 701.7,837.4 702.7,837.3 703.7,837.5 704.7,837.7 705.8,837.7 706.8,834.0 707.8,836.0 708.8,835.2 709.8,834.6 710.8,834.5 711.8,836.7 712.8,835.6 713.8,832.5 714.9,836.4 715.9,836.4 716.9,836.8 717.9,833.7 718.9,833.3 719.9,836.8 720.9,835.4 721.9,832.4 722.9,836.5 724.0,833.0 725.0,836.6 726.0,835.3 727.0,835.8 728.0,836.2 729.0,836.5 730.0,834.5 731.0,836.8 732.0,832.4 733.1,835.5 734.1,832.4 735.1,833.3 736.1,836.5 737.1,836.1 738.1,836.0 739.1,833.3 740.1,836.3 741.2,836.7 742.2,836.1 743.2,835.5 744.2,836.3 745.2,836.8 746.2,835.9 747.2,835.3 748.2,833.1 749.2,835.0 750.3,832.3 751.3,836.7 752.3,836.4 753.3,833.1 754.3,836.7 755.3,836.8 756.3,836.6 757.3,836.8 758.3,835.4 759.4,835.9 760.4,834.5 761.4,834.7 762.4,834.3 763.4,832.9 764.4,834.0 765.4,832.9 766.4,835.0 767.5,832.4 768.5,833.7 769.5,831.0 770.5,834.9 771.5,835.9 772.5,834.3 773.5,831.5 774.5,835.8 775.5,832.2 776.6,835.6 777.6,837.1 778.6,837.2 779.6,837.3 780.6,837.0 781.6,837.0 782.6,837.2 783.6,837.6 784.6,837.0 785.7,837.6 786.7,837.2 787.7,837.2 788.7,837.1 789.7,837.1 790.7,837.1 791.7,837.8 792.7,837.5 793.7,837.3 794.8,837.5 795.8,837.6 796.8,837.2 797.8,837.3 798.8,837.0 799.8,836.9 800.8,837.6 801.8,837.1 802.9,837.2 803.9,836.9 804.9,836.8 805.9,836.8 806.9,834.4 807.9,836.6 808.9,835.5 809.9,833.5 810.9,835.2 812.0,836.8 813.0,836.8 814.0,834.5 815.0,833.8 816.0,835.1 817.0,834.7 818.0,836.0 819.0,834.3 820.0,834.2 821.1,833.8 822.1,836.7 823.1,836.4 824.1,835.6 825.1,836.8 826.1,834.3 827.1,833.2 828.1,836.8 829.2,836.4 830.2,836.2 831.2,836.5 832.2,836.6 833.2,834.9 834.2,835.7 835.2,833.2 836.2,833.7 837.2,834.1 838.3,833.6 839.3,836.4 840.3,833.5 841.3,836.6 842.3,834.5 843.3,836.2 844.3,835.7 845.3,833.5 846.3,836.4 847.4,836.5 848.4,833.4 849.4,836.0 850.4,835.6 851.4,834.7 852.4,836.7 853.4,836.7 854.4,836.8 855.4,836.7 856.5,836.6 857.5,834.8 858.5,834.4 859.5,836.1 860.5,834.7 861.5,836.0 862.5,835.7 863.5,832.8 864.6,830.2 865.6,834.1 866.6,834.8 867.6,835.1 868.6,835.5 869.6,831.4 870.6,835.5 871.6,832.9 872.6,833.9 873.7,835.2 874.7,837.4 875.7,836.9 876.7,837.4 877.7,837.8 878.7,837.0 879.7,837.7 880.7,836.8 881.7,837.7 882.8,837.1 883.8,837.1 884.8,837.3 885.8,837.4 886.8,837.5 887.8,837.5 888.8,837.7 889.8,837.3 890.8,837.0 891.9,837.1 892.9,837.4 893.9,837.3 894.9,836.9 895.9,837.5 896.9,837.2 897.9,836.9 898.9,837.1 900.0,837.4 901.0,836.8 902.0,836.4 903.0,836.8 904.0,835.8 905.0,835.7 906.0,836.8 907.0,834.3 908.0,835.6 909.1,836.8 910.1,836.5 911.1,834.4 912.1,836.0 913.1,833.0 914.1,836.8 915.1,834.0 916.1,836.0 917.1,836.3 918.2,836.7 919.2,836.8 920.2,834.4 921.2,834.4 922.2,833.3 923.2,834.7 924.2,836.3 925.2,836.1 926.2,836.8 927.3,836.5 928.3,834.2 929.3,836.6 930.3,836.8 931.3,836.0 932.3,836.7 933.3,835.2 934.3,836.8 935.4,835.0 936.4,832.9 937.4,836.8 938.4,836.3 939.4,836.7 940.4,832.8 941.4,833.9 942.4,836.8 943.4,836.8 944.5,836.2 945.5,836.7 946.5,836.6 947.5,835.0 948.5,836.1 949.5,836.4 950.5,834.8 951.5,836.5 952.5,836.6 953.6,836.8 954.6,836.7 955.6,835.1 956.6,835.4 957.6,836.7 958.6,836.3 959.6,836.8 960.6,835.6 961.7,830.9 962.7,832.4 963.7,834.7 964.7,834.8 965.7,835.9 966.7,832.2 967.7,835.1 968.7,836.0 969.7,834.7 970.8,835.8 971.8,837.0 972.8,836.9 973.8,837.7 974.8,837.4 975.8,837.0 976.8,837.1 977.8,837.7 978.8,837.3 979.9,837.5 980.9,837.5 981.9,837.5 982.9,837.5 983.9,837.3 984.9,837.4 985.9,837.8 986.9,837.2 987.9,837.0 989.0,837.0 990.0,837.1 991.0,837.2 992.0,836.9 993.0,837.2 994.0,837.8 995.0,836.9 996.0,837.7 997.1,835.2 998.1,836.0 999.1,835.1 1000.1,835.1 1001.1,831.2 1002.1,835.2 1003.1,835.5 1004.1,834.3 1005.1,833.0 1006.2,831.1 1007.2,836.0 1008.2,832.8 1009.2,834.4 1010.2,835.6 1011.2,833.3 1012.2,830.3 1013.2,836.0 1014.2,829.5 1015.3,836.0 1016.3,834.8 1017.3,835.6 1018.3,833.9 1019.3,830.8 1020.3,835.8 1021.3,829.5 1022.3,832.8 1023.3,836.0 1024.4,836.0 1025.4,830.2 1026.4,833.9 1027.4,836.0 1028.4,833.2 1029.4,834.9 1030.4,836.0 1031.4,829.7 1032.5,836.0 1033.5,835.9 1034.5,831.6 1035.5,835.7 1036.5,835.9 1037.5,830.0 1038.5,835.9 1039.5,835.9 1040.5,834.2 1041.6,834.3 1042.6,830.2 1043.6,833.6 1044.6,834.4 1045.6,835.9 1046.6,835.8 1047.6,834.6 1048.6,835.7 1049.6,833.5 1050.7,835.5 1051.7,833.0 1052.7,832.0 1053.7,830.1 1054.7,830.9 1055.7,833.3 1056.7,829.9 1057.7,835.4 1058.8,834.2 1059.8,833.2 1060.8,829.8 1061.8,833.3 1062.8,833.8 1063.8,836.1 1064.8,835.0 1065.8,834.6 1066.8,835.5 1067.9,835.3 1068.9,835.9 1069.9,836.6 1070.9,836.6 1071.9,836.0 1072.9,834.9 1073.9,837.0 1074.9,837.2 1075.9,837.6 1077.0,837.7 1078.0,837.6 1079.0,837.5 1080.0,837.6 1081.0,837.1 1082.0,837.2 1083.0,837.5 1084.0,837.3 1085.0,837.2 1086.1,837.7 1087.1,837.5 1088.1,837.7 1089.1,837.2 1090.1,837.1 1091.1,837.6 1092.1,837.7 1093.1,837.2 1094.2,831.1 1095.2,832.2 1096.2,833.5 1097.2,834.0 1098.2,831.8 1099.2,834.3 1100.2,831.5 1101.2,835.3 1102.2,834.1 1103.3,833.2 1104.3,834.0 1105.3,832.7 1106.3,832.5 1107.3,834.7 1108.3,835.3 1109.3,835.0 1110.3,835.1 1111.3,832.0 1112.4,832.3 1113.4,835.3 1114.4,836.7 1115.4,836.4 1116.4,834.5 1117.4,836.9 1118.4,833.9 1119.4,837.0 1120.5,835.1 1121.5,833.4 1122.5,834.9 1123.5,836.7 1124.5,837.1 1125.5,837.1 1126.5,837.1 1127.5,837.0 1128.5,836.3 1129.6,837.2 1130.6,836.5 1131.6,836.6 1132.6,836.1 1133.6,836.6 1134.6,836.0 1135.6,835.5 1136.6,837.3 1137.6,836.2 1138.7,836.8 1139.7,837.4 1140.7,836.0 1141.7,835.6 1141.7,838.3" fill="#b3e4ec"/>
<polyline points="489.3,836.8 490.3,836.1 491.3,835.4 492.3,837.4 493.3,836.5 494.4,837.4 495.4,835.9 496.4,836.6 497.4,837.4 498.4,836.3 499.4,836.0 500.4,835.3 501.4,836.7 502.4,835.8 503.5,835.5 504.5,835.4 505.5,836.3 506.5,837.4 507.5,837.5 508.5,837.7 509.5,836.9 510.5,837.8 511.6,837.1 512.6,835.5 513.6,833.1 514.6,835.2 515.6,836.1 516.6,835.8 517.6,833.1 518.6,833.0 519.6,834.5 520.7,835.8 521.7,834.6 522.7,836.8 523.7,834.7 524.7,836.5 525.7,832.9 526.7,833.3 527.7,834.5 528.7,833.5 529.8,837.1 530.8,833.6 531.8,834.4 532.8,836.9 533.8,837.2 534.8,835.6 535.8,833.1 536.8,837.2 537.9,837.1 538.9,837.0 539.9,836.8 540.9,833.2 541.9,837.1 542.9,835.7 543.9,835.7 544.9,837.1 545.9,837.2 547.0,835.7 548.0,835.2 549.0,833.8 550.0,837.1 551.0,834.8 552.0,834.2 553.0,836.3 554.0,835.0 555.0,837.0 556.1,836.7 557.1,837.0 558.1,832.4 559.1,835.5 560.1,836.8 561.1,835.7 562.1,832.5 563.1,834.5 564.1,836.8 565.2,834.2 566.2,836.8 567.2,835.9 568.2,835.9 569.2,836.2 570.2,836.3 571.2,832.1 572.2,836.4 573.3,835.1 574.3,835.2 575.3,833.4 576.3,834.4 577.3,831.8 578.3,833.1 579.3,835.2 580.3,836.6 581.3,833.5 582.4,836.5 583.4,833.6 584.4,835.9 585.4,836.0 586.4,836.5 587.4,835.0 588.4,837.0 589.4,836.4 590.4,835.1 591.5,836.9 592.5,837.2 593.5,836.1 594.5,836.5 595.5,837.2 596.5,836.1 597.5,836.2 598.5,836.0 599.5,837.1 600.6,837.2 601.6,837.5 602.6,837.4 603.6,837.0 604.6,837.0 605.6,837.4 606.6,837.1 607.6,837.1 608.7,836.9 609.7,837.7 610.7,837.1 611.7,837.4 612.7,836.8 613.7,837.3 614.7,837.5 615.7,837.0 616.7,837.0 617.8,837.6 618.8,837.6 619.8,837.8 620.8,836.9 621.8,837.1 622.8,837.2 623.8,837.6 624.8,837.4 625.8,837.3 626.9,837.5 627.9,837.1 628.9,837.2 629.9,837.2 630.9,837.0 631.9,837.0 632.9,837.4 633.9,837.3 635.0,836.9 636.0,837.1 637.0,837.2 638.0,837.2 639.0,837.4 640.0,837.7 641.0,837.6 642.0,837.6 643.0,836.8 644.1,832.7 645.1,831.3 646.1,835.9 647.1,835.2 648.1,836.5 649.1,833.4 650.1,836.7 651.1,835.8 652.1,834.1 653.2,836.3 654.2,831.9 655.2,834.7 656.2,834.9 657.2,833.0 658.2,834.4 659.2,835.4 660.2,836.3 661.2,834.5 662.3,836.8 663.3,836.6 664.3,836.1 665.3,836.3 666.3,836.8 667.3,832.0 668.3,836.5 669.3,833.8 670.4,836.8 671.4,836.6 672.4,835.7 673.4,836.8 674.4,836.3 675.4,832.2 676.4,832.7 677.4,832.1 678.4,835.1 679.5,835.9 680.5,835.7 681.5,837.5 682.5,837.5 683.5,837.5 684.5,837.3 685.5,837.4 686.5,837.0 687.5,837.4 688.6,837.0 689.6,836.9 690.6,837.3 691.6,836.8 692.6,837.6 693.6,837.8 694.6,837.6 695.6,837.3 696.6,837.0 697.7,837.5 698.7,837.1 699.7,836.8 700.7,837.2 701.7,837.4 702.7,837.3 703.7,837.5 704.7,837.7 705.8,837.7 706.8,834.0 707.8,836.0 708.8,835.2 709.8,834.6 710.8,834.5 711.8,836.7 712.8,835.6 713.8,832.5 714.9,836.4 715.9,836.4 716.9,836.8 717.9,833.7 718.9,833.3 719.9,836.8 720.9,835.4 721.9,832.4 722.9,836.5 724.0,833.0 725.0,836.6 726.0,835.3 727.0,835.8 728.0,836.2 729.0,836.5 730.0,834.5 731.0,836.8 732.0,832.4 733.1,835.5 734.1,832.4 735.1,833.3 736.1,836.5 737.1,836.1 738.1,836.0 739.1,833.3 740.1,836.3 741.2,836.7 742.2,836.1 743.2,835.5 744.2,836.3 745.2,836.8 746.2,835.9 747.2,835.3 748.2,833.1 749.2,835.0 750.3,832.3 751.3,836.7 752.3,836.4 753.3,833.1 754.3,836.7 755.3,836.8 756.3,836.6 757.3,836.8 758.3,835.4 759.4,835.9 760.4,834.5 761.4,834.7 762.4,834.3 763.4,832.9 764.4,834.0 765.4,832.9 766.4,835.0 767.5,832.4 768.5,833.7 769.5,831.0 770.5,834.9 771.5,835.9 772.5,834.3 773.5,831.5 774.5,835.8 775.5,832.2 776.6,835.6 777.6,837.1 778.6,837.2 779.6,837.3 780.6,837.0 781.6,837.0 782.6,837.2 783.6,837.6 784.6,837.0 785.7,837.6 786.7,837.2 787.7,837.2 788.7,837.1 789.7,837.1 790.7,837.1 791.7,837.8 792.7,837.5 793.7,837.3 794.8,837.5 795.8,837.6 796.8,837.2 797.8,837.3 798.8,837.0 799.8,836.9 800.8,837.6 801.8,837.1 802.9,837.2 803.9,836.9 804.9,836.8 805.9,836.8 806.9,834.4 807.9,836.6 808.9,835.5 809.9,833.5 810.9,835.2 812.0,836.8 813.0,836.8 814.0,834.5 815.0,833.8 816.0,835.1 817.0,834.7 818.0,836.0 819.0,834.3 820.0,834.2 821.1,833.8 822.1,836.7 823.1,836.4 824.1,835.6 825.1,836.8 826.1,834.3 827.1,833.2 828.1,836.8 829.2,836.4 830.2,836.2 831.2,836.5 832.2,836.6 833.2,834.9 834.2,835.7 835.2,833.2 836.2,833.7 837.2,834.1 838.3,833.6 839.3,836.4 840.3,833.5 841.3,836.6 842.3,834.5 843.3,836.2 844.3,835.7 845.3,833.5 846.3,836.4 847.4,836.5 848.4,833.4 849.4,836.0 850.4,835.6 851.4,834.7 852.4,836.7 853.4,836.7 854.4,836.8 855.4,836.7 856.5,836.6 857.5,834.8 858.5,834.4 859.5,836.1 860.5,834.7 861.5,836.0 862.5,835.7 863.5,832.8 864.6,830.2 865.6,834.1 866.6,834.8 867.6,835.1 868.6,835.5 869.6,831.4 870.6,835.5 871.6,832.9 872.6,833.9 873.7,835.2 874.7,837.4 875.7,836.9 876.7,837.4 877.7,837.8 878.7,837.0 879.7,837.7 880.7,836.8 881.7,837.7 882.8,837.1 883.8,837.1 884.8,837.3 885.8,837.4 886.8,837.5 887.8,837.5 888.8,837.7 889.8,837.3 890.8,837.0 891.9,837.1 892.9,837.4 893.9,837.3 894.9,836.9 895.9,837.5 896.9,837.2 897.9,836.9 898.9,837.1 900.0,837.4 901.0,836.8 902.0,836.4 903.0,836.8 904.0,835.8 905.0,835.7 906.0,836.8 907.0,834.3 908.0,835.6 909.1,836.8 910.1,836.5 911.1,834.4 912.1,836.0 913.1,833.0 914.1,836.8 915.1,834.0 916.1,836.0 917.1,836.3 918.2,836.7 919.2,836.8 920.2,834.4 921.2,834.4 922.2,833.3 923.2,834.7 924.2,836.3 925.2,836.1 926.2,836.8 927.3,836.5 928.3,834.2 929.3,836.6 930.3,836.8 931.3,836.0 932.3,836.7 933.3,835.2 934.3,836.8 935.4,835.0 936.4,832.9 937.4,836.8 938.4,836.3 939.4,836.7 940.4,832.8 941.4,833.9 942.4,836.8 943.4,836.8 944.5,836.2 945.5,836.7 946.5,836.6 947.5,835.0 948.5,836.1 949.5,836.4 950.5,834.8 951.5,836.5 952.5,836.6 953.6,836.8 954.6,836.7 955.6,835.1 956.6,835.4 957.6,836.7 958.6,836.3 959.6,836.8 960.6,835.6 961.7,830.9 962.7,832.4 963.7,834.7 964.7,834.8 965.7,835.9 966.7,832.2 967.7,835.1 968.7,836.0 969.7,834.7 970.8,835.8 971.8,837.0 972.8,836.9 973.8,837.7 974.8,837.4 975.8,837.0 976.8,837.1 977.8,837.7 978.8,837.3 979.9,837.5 980.9,837.5 981.9,837.5 982.9,837.5 983.9,837.3 984.9,837.4 985.9,837.8 986.9,837.2 987.9,837.0 989.0,837.0 990.0,837.1 991.0,837.2 992.0,836.9 993.0,837.2 994.0,837.8 995.0,836.9 996.0,837.7 997.1,835.2 998.1,836.0 999.1,835.1 1000.1,835.1 1001.1,831.2 1002.1,835.2 1003.1,835.5 1004.1,834.3 1005.1,833.0 1006.2,831.1 1007.2,836.0 1008.2,832.8 1009.2,834.4 1010.2,835.6 1011.2,833.3 1012.2,830.3 1013.2,836.0 1014.2,829.5 1015.3,836.0 1016.3,834.8 1017.3,835.6 1018.3,833.9 1019.3,830.8 1020.3,835.8 1021.3,829.5 1022.3,832.8 1023.3,836.0 1024.4,836.0 1025.4,830.2 1026.4,833.9 1027.4,836.0 1028.4,833.2 1029.4,834.9 1030.4,836.0 1031.4,829.7 1032.5,836.0 1033.5,835.9 1034.5,831.6 1035.5,835.7 1036.5,835.9 1037.5,830.0 1038.5,835.9 1039.5,835.9 1040.5,834.2 1041.6,834.3 1042.6,830.2 1043.6,833.6 1044.6,834.4 1045.6,835.9 1046.6,835.8 1047.6,834.6 1048.6,835.7 1049.6,833.5 1050.7,835.5 1051.7,833.0 1052.7,832.0 1053.7,830.1 1054.7,830.9 1055.7,833.3 1056.7,829.9 1057.7,835.4 1058.8,834.2 1059.8,833.2 1060.8,829.8 1061.8,833.3 1062.8,833.8 1063.8,836.1 1064.8,835.0 1065.8,834.6 1066.8,835.5 1067.9,835.3 1068.9,835.9 1069.9,836.6 1070.9,836.6 1071.9,836.0 1072.9,834.9 1073.9,837.0 1074.9,837.2 1075.9,837.6 1077.0,837.7 1078.0,837.6 1079.0,837.5 1080.0,837.6 1081.0,837.1 1082.0,837.2 1083.0,837.5 1084.0,837.3 1085.0,837.2 1086.1,837.7 1087.1,837.5 1088.1,837.7 1089.1,837.2 1090.1,837.1 1091.1,837.6 1092.1,837.7 1093.1,837.2 1094.2,831.1 1095.2,832.2 1096.2,833.5 1097.2,834.0 1098.2,831.8 1099.2,834.3 1100.2,831.5 1101.2,835.3 1102.2,834.1 1103.3,833.2 1104.3,834.0 1105.3,832.7 1106.3,832.5 1107.3,834.7 1108.3,835.3 1109.3,835.0 1110.3,835.1 1111.3,832.0 1112.4,832.3 1113.4,835.3 1114.4,836.7 1115.4,836.4 1116.4,834.5 1117.4,836.9 1118.4,833.9 1119.4,837.0 1120.5,835.1 1121.5,833.4 1122.5,834.9 1123.5,836.7 1124.5,837.1 1125.5,837.1 1126.5,837.1 1127.5,837.0 1128.5,836.3 1129.6,837.2 1130.6,836.5 1131.6,836.6 1132.6,836.1 1133.6,836.6 1134.6,836.0 1135.6,835.5 1136.6,837.3 1137.6,836.2 1138.7,836.8 1139.7,837.4 1140.7,836.0 1141.7,835.6" fill="none" stroke="#12b5cb" stroke-width="1.0" stroke-linejoin="round"/>
<line x1="483.5" x2="1148" y1="838.5999999999999" y2="838.5999999999999" stroke="#ccd6eb" stroke-width="1"/>
</svg>
<div class="t" style="left:426px;width:50.5px;text-align:right;top:696px;font-size:10.6px;color:#3c4043">0.15</div>
<div class="t" style="left:426px;width:50.5px;text-align:right;top:741.6px;font-size:10.6px;color:#3c4043">0.1</div>
<div class="t" style="left:426px;width:50.5px;text-align:right;top:787.5px;font-size:10.6px;color:#3c4043">0.05</div>
<div class="t" style="left:426px;width:50.5px;text-align:right;top:833.8px;font-size:10.6px;color:#3c4043">0</div>
<div class="t" style="left:449.5px;width:80px;text-align:center;top:846px;font-size:10.6px;color:#3c4043">Aug 7</div>
<div class="t" style="left:546.6px;width:80px;text-align:center;top:846px;font-size:10.6px;color:#3c4043">Aug 8</div>
<div class="t" style="left:643.7px;width:80px;text-align:center;top:846px;font-size:10.6px;color:#3c4043">Aug 9</div>
<div class="t" style="left:740.8px;width:80px;text-align:center;top:846px;font-size:10.6px;color:#3c4043">Aug 10</div>
<div class="t" style="left:837.9px;width:80px;text-align:center;top:846px;font-size:10.6px;color:#3c4043">Aug 11</div>
<div class="t" style="left:935.0px;width:80px;text-align:center;top:846px;font-size:10.6px;color:#3c4043">Aug 12</div>
<div class="t" style="left:1032.1px;width:80px;text-align:center;top:846px;font-size:10.6px;color:#3c4043">Aug 13</div>
<div class="t" style="left:715.6px;width:200px;text-align:center;top:863px;font-size:10.6px;color:#3c4043">Interval start Time</div>
<div style="position:absolute;left:567.3px;top:898.0px;width:14.5px;height:2px;background:#1a73e8"></div>
<div style="position:absolute;left:568.3px;top:900.0px;width:12.5px;height:3.5px;background:#1a73e8;opacity:0.4"></div>
<div class="t" style="left:586.8px;top:894.7px;font-size:10.6px;color:#3c4043">alerts - Concurrency Concurrency</div>
<div style="position:absolute;left:567.3px;top:914.9px;width:14.5px;height:2px;background:#e52592"></div>
<div style="position:absolute;left:568.3px;top:916.9px;width:12.5px;height:3.5px;background:#e52592;opacity:0.4"></div>
<div class="t" style="left:586.8px;top:911.6px;font-size:10.6px;color:#3c4043">dashboard - Concurrency Concurrency</div>
<div style="position:absolute;left:567.3px;top:931.8px;width:14.5px;height:2px;background:#f9ab00"></div>
<div style="position:absolute;left:568.3px;top:933.8px;width:12.5px;height:3.5px;background:#f9ab00;opacity:0.4"></div>
<div class="t" style="left:586.8px;top:928.5px;font-size:10.6px;color:#3c4043">explore - Concurrency Concurrency</div>
<div style="position:absolute;left:567.3px;top:948.7px;width:14.5px;height:2px;background:#9334e6"></div>
<div style="position:absolute;left:568.3px;top:950.7px;width:12.5px;height:3.5px;background:#9334e6;opacity:0.4"></div>
<div class="t" style="left:586.8px;top:945.4px;font-size:10.6px;color:#3c4043">regenerator - Concurrency Concurrency</div>
<div style="position:absolute;left:567.3px;top:965.6px;width:14.5px;height:2px;background:#079c98"></div>
<div style="position:absolute;left:568.3px;top:967.6px;width:12.5px;height:3.5px;background:#079c98;opacity:0.4"></div>
<div class="t" style="left:586.8px;top:962.3px;font-size:10.6px;color:#3c4043">suggest - Concurrency Concurrency</div>
<div style="position:absolute;left:810.4px;top:898.0px;width:14.5px;height:2px;background:#20b3cb"></div>
<div style="position:absolute;left:811.4px;top:900.0px;width:12.5px;height:3.5px;background:#20b3cb;opacity:0.4"></div>
<div class="t" style="left:829.7px;top:894.7px;font-size:10.6px;color:#3c4043">api4 - Concurrency Concurrency</div>
<div style="position:absolute;left:810.4px;top:914.9px;width:14.5px;height:2px;background:#e8710a"></div>
<div style="position:absolute;left:811.4px;top:916.9px;width:12.5px;height:3.5px;background:#e8710a;opacity:0.4"></div>
<div class="t" style="left:829.7px;top:911.6px;font-size:10.6px;color:#3c4043">drill_modal - Concurrency Concurrency</div>
<div style="position:absolute;left:810.4px;top:931.8px;width:14.5px;height:2px;background:#7cb342"></div>
<div style="position:absolute;left:811.4px;top:933.8px;width:12.5px;height:3.5px;background:#7cb342;opacity:0.4"></div>
<div class="t" style="left:829.7px;top:928.5px;font-size:10.6px;color:#3c4043">look - Concurrency Concurrency</div>
<div style="position:absolute;left:810.4px;top:948.7px;width:14.5px;height:2px;background:#80868b"></div>
<div style="position:absolute;left:811.4px;top:950.7px;width:12.5px;height:3.5px;background:#80868b;opacity:0.4"></div>
<div class="t" style="left:829.7px;top:945.4px;font-size:10.6px;color:#3c4043">scheduled_task - Concurrency Concurrency</div>
<div style="position:absolute;left:810.4px;top:965.6px;width:14.5px;height:1.6px;background:#a8a116"></div>
<div class="t" style="left:829.7px;top:962.3px;font-size:10.6px;color:#3c4043">Max Connections</div>
</body>
</html>
